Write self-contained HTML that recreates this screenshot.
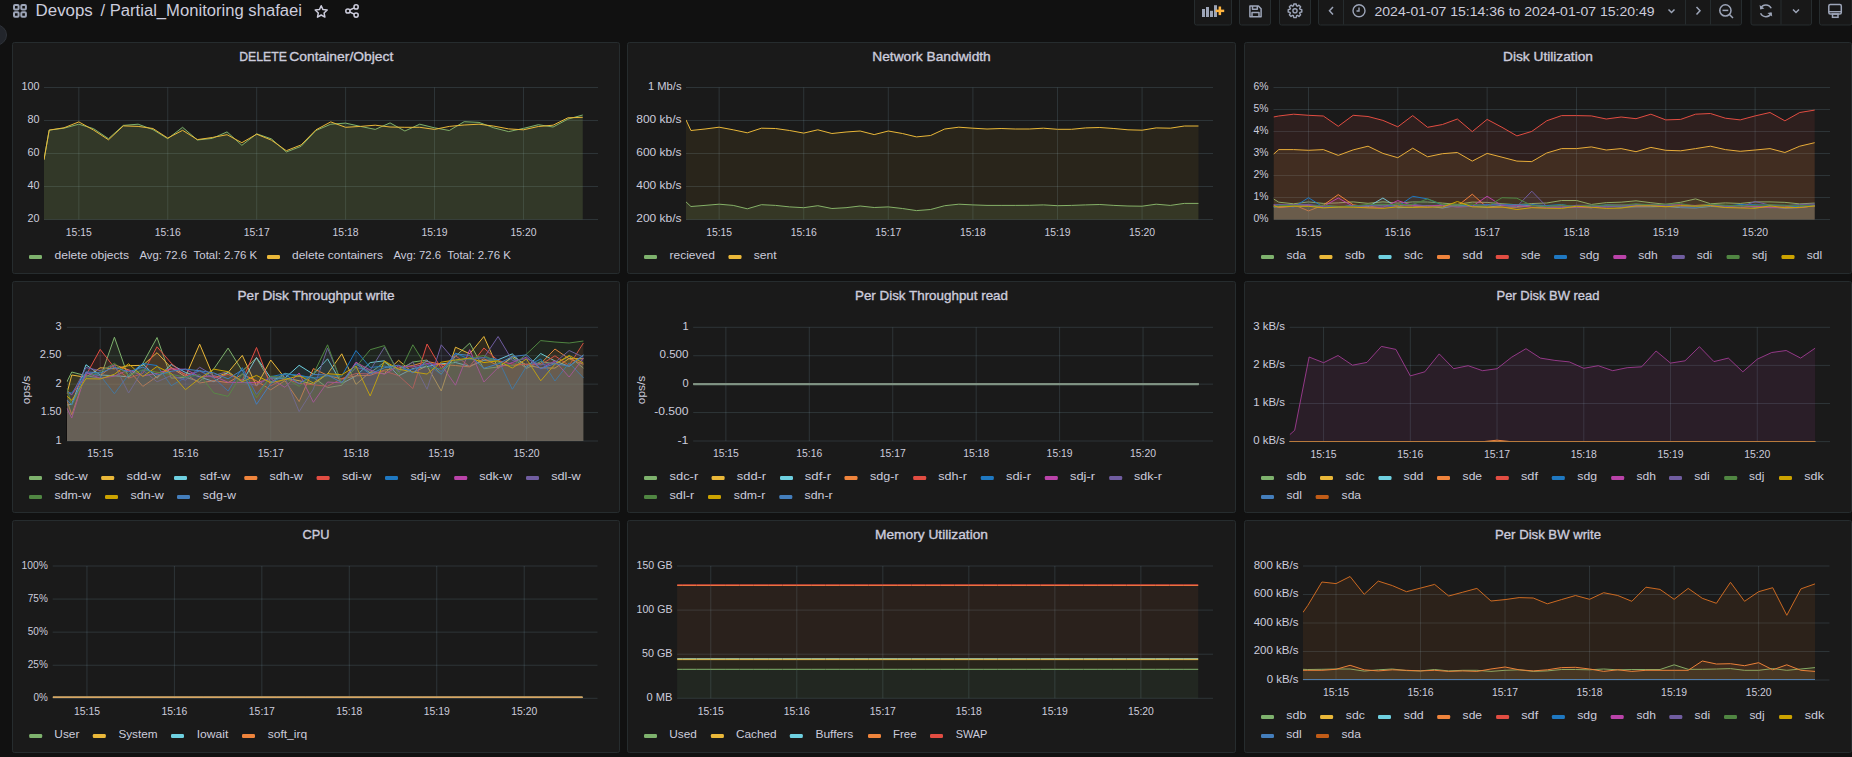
<!DOCTYPE html>
<html><head><meta charset="utf-8"><title>Devops / Partial_Monitoring shafaei</title>
<style>html,body{margin:0;padding:0;background:#111111;overflow:hidden;width:1852px;height:757px}
svg{display:block} text{font-family:"Liberation Sans",sans-serif}</style></head>
<body><svg width="1852" height="757" viewBox="0 0 1852 757" font-family='"Liberation Sans", sans-serif'><rect width="1852" height="757" fill="#111111"/><circle cx="-3.5" cy="35" r="10" fill="#22252b" stroke="#2f3339" stroke-width="1"/><rect x="14" y="5" width="4.6" height="4.6" rx="1" fill="none" stroke="#9da5b8" stroke-width="2"/><rect x="21.3" y="5" width="4.6" height="4.6" rx="1" fill="none" stroke="#9da5b8" stroke-width="2"/><rect x="14" y="12.2" width="4.6" height="4.6" rx="1" fill="none" stroke="#9da5b8" stroke-width="2"/><rect x="21.3" y="12.2" width="4.6" height="4.6" rx="1" fill="none" stroke="#9da5b8" stroke-width="2"/><text x="35.6" y="16" font-size="16" fill="#ccccdc" textLength="57.2" lengthAdjust="spacingAndGlyphs">Devops</text><text x="100.5" y="16" font-size="16" fill="#ccccdc" textLength="201.5" lengthAdjust="spacingAndGlyphs">/ Partial_Monitoring shafaei</text><polygon points="321.20,5.70 322.96,9.57 327.19,10.05 324.05,12.93 324.90,17.10 321.20,15.00 317.50,17.10 318.35,12.93 315.21,10.05 319.44,9.57" fill="none" stroke="#ccccdc" stroke-width="1.5" stroke-linejoin="round"/><g fill="none" stroke="#ccccdc" stroke-width="1.5"><circle cx="356.1" cy="6.9" r="2.1"/><circle cx="347.9" cy="11" r="2.1"/><circle cx="356.1" cy="15.1" r="2.1"/><line x1="349.8" y1="10" x2="354.2" y2="7.9"/><line x1="349.8" y1="12" x2="354.2" y2="14.1"/></g><rect x="1194.5" y="-4.5" width="37" height="29.5" rx="2" fill="#181818" stroke="#262c2e" stroke-width="1"/><rect x="1239.5" y="-4.5" width="31" height="29.5" rx="2" fill="#181818" stroke="#262c2e" stroke-width="1"/><rect x="1279.5" y="-4.5" width="31" height="29.5" rx="2" fill="#181818" stroke="#262c2e" stroke-width="1"/><rect x="1318.5" y="-4.5" width="423" height="29.5" rx="2" fill="#181818" stroke="#262c2e" stroke-width="1"/><rect x="1751.0" y="-4.5" width="60.5" height="29.5" rx="2" fill="#181818" stroke="#262c2e" stroke-width="1"/><rect x="1819.5" y="-4.5" width="32.5" height="29.5" rx="2" fill="#181818" stroke="#262c2e" stroke-width="1"/><line x1="1343.5" y1="-4" x2="1343.5" y2="24.5" stroke="#262c2e" stroke-width="1"/><line x1="1685.5" y1="-4" x2="1685.5" y2="24.5" stroke="#262c2e" stroke-width="1"/><line x1="1710.5" y1="-4" x2="1710.5" y2="24.5" stroke="#262c2e" stroke-width="1"/><line x1="1781" y1="-4" x2="1781" y2="24.5" stroke="#262c2e" stroke-width="1"/><rect x="1202" y="9" width="3" height="8" fill="#9da5b8"/><rect x="1206" y="7" width="3" height="10" fill="#9da5b8"/><rect x="1210" y="10.8" width="3" height="6.199999999999999" fill="#9da5b8"/><rect x="1214" y="5.2" width="3" height="11.8" fill="#9da5b8"/><rect x="1215.6" y="9.6" width="8.6" height="2.5" fill="#FFB43F"/><rect x="1218.6" y="6.5" width="2.5" height="8.6" fill="#FFB43F"/><g fill="none" stroke="#9da5b8" stroke-width="1.5" stroke-linejoin="round"><path d="M1249.9 6 h8.5 l2.7 2.7 v8 h-11.2 z"/><path d="M1252.5 6 v3.2 h4.8 v-3.2"/><path d="M1252 16.7 v-4.2 h7 v4.2"/></g><polygon points="1299.97,9.26 1301.80,9.63 1301.80,11.97 1299.97,12.34 1299.60,13.23 1300.63,14.78 1298.98,16.43 1297.43,15.40 1296.54,15.77 1296.17,17.60 1293.83,17.60 1293.46,15.77 1292.57,15.40 1291.02,16.43 1289.37,14.78 1290.40,13.23 1290.03,12.34 1288.20,11.97 1288.20,9.63 1290.03,9.26 1290.40,8.37 1289.37,6.82 1291.02,5.17 1292.57,6.20 1293.46,5.83 1293.83,4.00 1296.17,4.00 1296.54,5.83 1297.43,6.20 1298.98,5.17 1300.63,6.82 1299.60,8.37" fill="none" stroke="#9da5b8" stroke-width="1.4" stroke-linejoin="round"/><circle cx="1295" cy="10.8" r="2.1" fill="none" stroke="#9da5b8" stroke-width="1.4"/><path d="M1333 7 l-3.5 3.8 l3.5 3.8" fill="none" stroke="#9da5b8" stroke-width="1.5"/><path d="M1696.5 7 l3.5 3.8 l-3.5 3.8" fill="none" stroke="#9da5b8" stroke-width="1.5"/><path d="M1668.5 9.5 l3 3 l3 -3" fill="none" stroke="#9da5b8" stroke-width="1.5"/><path d="M1793 9.5 l3 3 l3 -3" fill="none" stroke="#9da5b8" stroke-width="1.5"/><circle cx="1359" cy="10.8" r="6" fill="none" stroke="#9da5b8" stroke-width="1.4"/><path d="M1359 7.5 v3.5 h-2.5" fill="none" stroke="#9da5b8" stroke-width="1.4"/><text x="1374.5" y="16" font-size="12.5" fill="#ccccdc" textLength="280" lengthAdjust="spacingAndGlyphs">2024-01-07 15:14:36 to 2024-01-07 15:20:49</text><g fill="none" stroke="#9da5b8" stroke-width="1.5"><circle cx="1725.4" cy="10.4" r="5.6"/><line x1="1729.5" y1="14.5" x2="1733" y2="18"/><line x1="1722.5" y1="10.4" x2="1728.3" y2="10.4"/></g><g fill="none" stroke="#9da5b8" stroke-width="1.5"><path d="M1771.2 8.3 A5.8 5.8 0 0 0 1760.6 8.5"/><path d="M1760.6 13.3 A5.8 5.8 0 0 0 1771.2 13.1"/></g><path d="M1759.6 5 l0.6 4.4 l4.2 -0.9 z" fill="#9da5b8"/><path d="M1772.2 16.6 l-0.6 -4.4 l-4.2 0.9 z" fill="#9da5b8"/><g fill="none" stroke="#9da5b8" stroke-width="1.5"><rect x="1828.8" y="4.5" width="12.5" height="9.5" rx="1.5"/><rect x="1832.5" y="14" width="5.5" height="3.3"/></g><line x1="1829" y1="11.7" x2="1841" y2="11.7" stroke="#9da5b8" stroke-width="1.4"/><rect x="12.5" y="42.5" width="607" height="231" rx="2" ry="2" fill="#1a1a1a" stroke="#262c2e" stroke-width="1"/><text x="239.30" y="61.00" font-size="13" textLength="47.5" lengthAdjust="spacingAndGlyphs" fill="#ccccdc" stroke="#ccccdc" stroke-width="0.35">DELETE</text><text x="289.30" y="61.00" font-size="13" textLength="104" lengthAdjust="spacingAndGlyphs" fill="#ccccdc" stroke="#ccccdc" stroke-width="0.35">Container/Object</text><path d="M44 87.50H598M44 120.50H598M44 153.50H598M44 186.50H598M44 219.50H598M78.83 87.5V219.5M167.75 87.5V219.5M256.68 87.5V219.5M345.60 87.5V219.5M434.53 87.5V219.5M523.45 87.5V219.5" stroke="#9cc8d8" stroke-opacity="0.155" stroke-width="1" fill="none"/><clipPath id="clip1"><rect x="44" y="85.5" width="554" height="134.5"/></clipPath><g clip-path="url(#clip1)"><path d="M44.00 159.70 L49.19 130.10 L64.01 128.20 L78.83 124.20 L93.65 128.70 L108.47 138.70 L123.29 125.40 L138.11 124.20 L152.93 129.60 L167.75 138.70 L182.57 127.30 L197.39 140.00 L212.22 138.40 L227.04 131.90 L241.86 145.30 L256.68 133.80 L271.50 138.90 L286.32 152.00 L301.14 146.30 L315.96 130.50 L330.78 124.20 L345.60 123.10 L360.42 126.40 L375.24 129.40 L390.06 122.90 L404.89 131.00 L419.71 124.20 L434.53 127.80 L449.35 130.50 L464.17 121.70 L478.99 122.40 L493.81 127.80 L508.63 131.60 L523.45 128.40 L538.27 124.70 L553.09 127.00 L567.91 119.10 L582.73 115.00 L582.73 219.50 L44.00 219.50 Z" fill="#7EB26D" fill-opacity="0.16" stroke="none"/><path d="M44.00 159.70 L49.19 130.10 L64.01 128.20 L78.83 124.20 L93.65 128.70 L108.47 138.70 L123.29 125.40 L138.11 124.20 L152.93 129.60 L167.75 138.70 L182.57 127.30 L197.39 140.00 L212.22 138.40 L227.04 131.90 L241.86 145.30 L256.68 133.80 L271.50 138.90 L286.32 152.00 L301.14 146.30 L315.96 130.50 L330.78 124.20 L345.60 123.10 L360.42 126.40 L375.24 129.40 L390.06 122.90 L404.89 131.00 L419.71 124.20 L434.53 127.80 L449.35 130.50 L464.17 121.70 L478.99 122.40 L493.81 127.80 L508.63 131.60 L523.45 128.40 L538.27 124.70 L553.09 127.00 L567.91 119.10 L582.73 115.00" fill="none" stroke="#7EB26D" stroke-width="1.0" stroke-linejoin="round"/><path d="M44.00 159.70 L49.19 130.10 L64.01 127.80 L78.83 121.90 L93.65 130.10 L108.47 139.80 L123.29 125.90 L138.11 126.40 L152.93 128.50 L167.75 138.10 L182.57 130.30 L197.39 139.60 L212.22 137.50 L227.04 134.70 L241.86 142.70 L256.68 134.20 L271.50 140.20 L286.32 150.70 L301.14 144.90 L315.96 129.80 L330.78 121.90 L345.60 127.30 L360.42 126.40 L375.24 125.20 L390.06 127.00 L404.89 127.30 L419.71 127.30 L434.53 129.40 L449.35 126.40 L464.17 125.00 L478.99 124.20 L493.81 126.10 L508.63 128.90 L523.45 129.80 L538.27 126.50 L553.09 125.20 L567.91 117.80 L582.73 117.30 L582.73 219.50 L44.00 219.50 Z" fill="#EAB839" fill-opacity="0.05" stroke="none"/><path d="M44.00 159.70 L49.19 130.10 L64.01 127.80 L78.83 121.90 L93.65 130.10 L108.47 139.80 L123.29 125.90 L138.11 126.40 L152.93 128.50 L167.75 138.10 L182.57 130.30 L197.39 139.60 L212.22 137.50 L227.04 134.70 L241.86 142.70 L256.68 134.20 L271.50 140.20 L286.32 150.70 L301.14 144.90 L315.96 129.80 L330.78 121.90 L345.60 127.30 L360.42 126.40 L375.24 125.20 L390.06 127.00 L404.89 127.30 L419.71 127.30 L434.53 129.40 L449.35 126.40 L464.17 125.00 L478.99 124.20 L493.81 126.10 L508.63 128.90 L523.45 129.80 L538.27 126.50 L553.09 125.20 L567.91 117.80 L582.73 117.30" fill="none" stroke="#EAB839" stroke-width="1.0" stroke-linejoin="round"/></g><text x="39.50" y="90.10" font-size="11" text-anchor="end" textLength="18" lengthAdjust="spacingAndGlyphs" fill="#ccccdc">100</text><text x="39.50" y="123.10" font-size="11" text-anchor="end" textLength="12" lengthAdjust="spacingAndGlyphs" fill="#ccccdc">80</text><text x="39.50" y="156.10" font-size="11" text-anchor="end" textLength="12" lengthAdjust="spacingAndGlyphs" fill="#ccccdc">60</text><text x="39.50" y="189.10" font-size="11" text-anchor="end" textLength="12" lengthAdjust="spacingAndGlyphs" fill="#ccccdc">40</text><text x="39.50" y="222.10" font-size="11" text-anchor="end" textLength="12" lengthAdjust="spacingAndGlyphs" fill="#ccccdc">20</text><text x="78.83" y="235.70" font-size="11" text-anchor="middle" textLength="26" lengthAdjust="spacingAndGlyphs" fill="#ccccdc">15:15</text><text x="167.75" y="235.70" font-size="11" text-anchor="middle" textLength="26" lengthAdjust="spacingAndGlyphs" fill="#ccccdc">15:16</text><text x="256.68" y="235.70" font-size="11" text-anchor="middle" textLength="26" lengthAdjust="spacingAndGlyphs" fill="#ccccdc">15:17</text><text x="345.60" y="235.70" font-size="11" text-anchor="middle" textLength="26" lengthAdjust="spacingAndGlyphs" fill="#ccccdc">15:18</text><text x="434.53" y="235.70" font-size="11" text-anchor="middle" textLength="26" lengthAdjust="spacingAndGlyphs" fill="#ccccdc">15:19</text><text x="523.45" y="235.70" font-size="11" text-anchor="middle" textLength="26" lengthAdjust="spacingAndGlyphs" fill="#ccccdc">15:20</text><rect x="29" y="255" width="13" height="4" rx="1.2" fill="#7EB26D"/><text x="54.50" y="259.00" font-size="11" textLength="74.5" lengthAdjust="spacingAndGlyphs" fill="#ccccdc">delete objects</text><rect x="267" y="255" width="13" height="4" rx="1.2" fill="#EAB839"/><text x="292.00" y="259.00" font-size="11" textLength="91" lengthAdjust="spacingAndGlyphs" fill="#ccccdc">delete containers</text><text x="139.50" y="259.00" font-size="11" textLength="47.6" lengthAdjust="spacingAndGlyphs" fill="#ccccdc">Avg: 72.6</text><text x="193.60" y="259.00" font-size="11" textLength="63.6" lengthAdjust="spacingAndGlyphs" fill="#ccccdc">Total: 2.76 K</text><text x="393.50" y="259.00" font-size="11" textLength="47.6" lengthAdjust="spacingAndGlyphs" fill="#ccccdc">Avg: 72.6</text><text x="447.30" y="259.00" font-size="11" textLength="63.6" lengthAdjust="spacingAndGlyphs" fill="#ccccdc">Total: 2.76 K</text><rect x="627.5" y="42.5" width="608" height="231" rx="2" ry="2" fill="#1a1a1a" stroke="#262c2e" stroke-width="1"/><text x="931.50" y="61.00" font-size="13" text-anchor="middle" font-weight="500" textLength="118.5" lengthAdjust="spacingAndGlyphs" fill="#ccccdc" stroke="#ccccdc" stroke-width="0.35">Network Bandwidth</text><path d="M686 87.50H1213M686 120.50H1213M686 153.50H1213M686 186.50H1213M686 219.50H1213M719.13 87.5V219.5M803.72 87.5V219.5M888.31 87.5V219.5M972.90 87.5V219.5M1057.49 87.5V219.5M1142.08 87.5V219.5" stroke="#9cc8d8" stroke-opacity="0.155" stroke-width="1" fill="none"/><clipPath id="clip2"><rect x="686" y="85.5" width="527" height="134.5"/></clipPath><g clip-path="url(#clip2)"><path d="M686.00 201.90 L690.93 206.50 L705.03 205.40 L719.13 204.20 L733.23 205.40 L747.33 208.80 L761.43 204.70 L775.53 205.40 L789.62 206.90 L803.72 207.70 L817.82 205.70 L831.92 208.50 L846.02 207.70 L860.12 206.00 L874.21 207.50 L888.31 206.90 L902.41 208.50 L916.51 210.60 L930.61 209.50 L944.71 205.70 L958.80 204.20 L972.90 204.90 L987.00 205.40 L1001.10 205.40 L1015.20 205.40 L1029.30 205.30 L1043.40 204.90 L1057.49 205.70 L1071.59 205.40 L1085.69 204.90 L1099.79 204.50 L1113.89 205.40 L1127.99 206.00 L1142.08 206.20 L1156.18 204.20 L1170.28 205.40 L1184.38 203.40 L1198.48 203.40 L1198.48 219.50 L686.00 219.50 Z" fill="#7EB26D" fill-opacity="0.13" stroke="none"/><path d="M686.00 201.90 L690.93 206.50 L705.03 205.40 L719.13 204.20 L733.23 205.40 L747.33 208.80 L761.43 204.70 L775.53 205.40 L789.62 206.90 L803.72 207.70 L817.82 205.70 L831.92 208.50 L846.02 207.70 L860.12 206.00 L874.21 207.50 L888.31 206.90 L902.41 208.50 L916.51 210.60 L930.61 209.50 L944.71 205.70 L958.80 204.20 L972.90 204.90 L987.00 205.40 L1001.10 205.40 L1015.20 205.40 L1029.30 205.30 L1043.40 204.90 L1057.49 205.70 L1071.59 205.40 L1085.69 204.90 L1099.79 204.50 L1113.89 205.40 L1127.99 206.00 L1142.08 206.20 L1156.18 204.20 L1170.28 205.40 L1184.38 203.40 L1198.48 203.40" fill="none" stroke="#7EB26D" stroke-width="1.0" stroke-linejoin="round"/><path d="M686.00 119.90 L690.93 130.50 L705.03 129.00 L719.13 127.20 L733.23 129.80 L747.33 132.80 L761.43 128.20 L775.53 128.50 L789.62 130.50 L803.72 133.10 L817.82 129.80 L831.92 133.50 L846.02 132.00 L860.12 131.00 L874.21 134.60 L888.31 131.00 L902.41 133.50 L916.51 136.90 L930.61 135.50 L944.71 129.00 L958.80 127.20 L972.90 128.20 L987.00 129.00 L1001.10 128.50 L1015.20 129.00 L1029.30 129.00 L1043.40 128.20 L1057.49 129.30 L1071.59 129.30 L1085.69 127.90 L1099.79 127.50 L1113.89 128.50 L1127.99 129.80 L1142.08 130.20 L1156.18 127.90 L1170.28 128.20 L1184.38 126.00 L1198.48 126.00 L1198.48 219.50 L686.00 219.50 Z" fill="#EAB839" fill-opacity="0.08" stroke="none"/><path d="M686.00 119.90 L690.93 130.50 L705.03 129.00 L719.13 127.20 L733.23 129.80 L747.33 132.80 L761.43 128.20 L775.53 128.50 L789.62 130.50 L803.72 133.10 L817.82 129.80 L831.92 133.50 L846.02 132.00 L860.12 131.00 L874.21 134.60 L888.31 131.00 L902.41 133.50 L916.51 136.90 L930.61 135.50 L944.71 129.00 L958.80 127.20 L972.90 128.20 L987.00 129.00 L1001.10 128.50 L1015.20 129.00 L1029.30 129.00 L1043.40 128.20 L1057.49 129.30 L1071.59 129.30 L1085.69 127.90 L1099.79 127.50 L1113.89 128.50 L1127.99 129.80 L1142.08 130.20 L1156.18 127.90 L1170.28 128.20 L1184.38 126.00 L1198.48 126.00" fill="none" stroke="#EAB839" stroke-width="1.0" stroke-linejoin="round"/></g><text x="681.50" y="90.10" font-size="11" text-anchor="end" textLength="33.6" lengthAdjust="spacingAndGlyphs" fill="#ccccdc">1 Mb/s</text><text x="681.50" y="123.10" font-size="11" text-anchor="end" textLength="45.2" lengthAdjust="spacingAndGlyphs" fill="#ccccdc">800 kb/s</text><text x="681.50" y="156.10" font-size="11" text-anchor="end" textLength="45.2" lengthAdjust="spacingAndGlyphs" fill="#ccccdc">600 kb/s</text><text x="681.50" y="189.10" font-size="11" text-anchor="end" textLength="45.2" lengthAdjust="spacingAndGlyphs" fill="#ccccdc">400 kb/s</text><text x="681.50" y="222.10" font-size="11" text-anchor="end" textLength="45.2" lengthAdjust="spacingAndGlyphs" fill="#ccccdc">200 kb/s</text><text x="719.13" y="235.70" font-size="11" text-anchor="middle" textLength="26" lengthAdjust="spacingAndGlyphs" fill="#ccccdc">15:15</text><text x="803.72" y="235.70" font-size="11" text-anchor="middle" textLength="26" lengthAdjust="spacingAndGlyphs" fill="#ccccdc">15:16</text><text x="888.31" y="235.70" font-size="11" text-anchor="middle" textLength="26" lengthAdjust="spacingAndGlyphs" fill="#ccccdc">15:17</text><text x="972.90" y="235.70" font-size="11" text-anchor="middle" textLength="26" lengthAdjust="spacingAndGlyphs" fill="#ccccdc">15:18</text><text x="1057.49" y="235.70" font-size="11" text-anchor="middle" textLength="26" lengthAdjust="spacingAndGlyphs" fill="#ccccdc">15:19</text><text x="1142.08" y="235.70" font-size="11" text-anchor="middle" textLength="26" lengthAdjust="spacingAndGlyphs" fill="#ccccdc">15:20</text><rect x="644" y="255" width="13" height="4" rx="1.2" fill="#7EB26D"/><text x="669.50" y="259.00" font-size="11" textLength="45.3" lengthAdjust="spacingAndGlyphs" fill="#ccccdc">recieved</text><rect x="728.5" y="255" width="13" height="4" rx="1.2" fill="#EAB839"/><text x="753.80" y="259.00" font-size="11" textLength="22.8" lengthAdjust="spacingAndGlyphs" fill="#ccccdc">sent</text><rect x="1244.5" y="42.5" width="607" height="231" rx="2" ry="2" fill="#1a1a1a" stroke="#262c2e" stroke-width="1"/><text x="1548.00" y="61.00" font-size="13" text-anchor="middle" font-weight="500" textLength="90" lengthAdjust="spacingAndGlyphs" fill="#ccccdc" stroke="#ccccdc" stroke-width="0.35">Disk Utilization</text><path d="M1273.5 87.50H1830M1273.5 109.50H1830M1273.5 131.50H1830M1273.5 153.50H1830M1273.5 175.50H1830M1273.5 197.50H1830M1273.5 219.50H1830M1308.49 87.5V219.5M1397.81 87.5V219.5M1487.14 87.5V219.5M1576.46 87.5V219.5M1665.79 87.5V219.5M1755.12 87.5V219.5" stroke="#9cc8d8" stroke-opacity="0.155" stroke-width="1" fill="none"/><clipPath id="clip3"><rect x="1273.5" y="85.5" width="556.5" height="134.5"/></clipPath><g clip-path="url(#clip3)"><path d="M1273.50 198.90 L1278.71 202.18 L1293.60 203.78 L1308.49 201.93 L1323.37 203.41 L1338.26 202.87 L1353.15 201.89 L1368.04 203.32 L1382.92 201.82 L1397.81 203.09 L1412.70 201.92 L1427.59 201.99 L1442.47 203.06 L1457.36 204.35 L1472.25 202.10 L1487.14 202.41 L1502.03 203.71 L1516.91 204.73 L1531.80 203.55 L1546.69 202.97 L1561.58 200.50 L1576.46 200.50 L1591.35 204.45 L1606.24 202.63 L1621.13 202.16 L1636.01 200.80 L1650.90 202.69 L1665.79 204.31 L1680.68 202.28 L1695.56 198.90 L1710.45 203.74 L1725.34 202.89 L1740.23 203.45 L1755.12 201.90 L1770.00 201.89 L1784.89 202.36 L1799.78 203.88 L1814.67 203.07 L1814.67 219.50 L1273.50 219.50 Z" fill="#7EB26D" fill-opacity="0.1" stroke="none"/><path d="M1273.50 198.90 L1278.71 202.18 L1293.60 203.78 L1308.49 201.93 L1323.37 203.41 L1338.26 202.87 L1353.15 201.89 L1368.04 203.32 L1382.92 201.82 L1397.81 203.09 L1412.70 201.92 L1427.59 201.99 L1442.47 203.06 L1457.36 204.35 L1472.25 202.10 L1487.14 202.41 L1502.03 203.71 L1516.91 204.73 L1531.80 203.55 L1546.69 202.97 L1561.58 200.50 L1576.46 200.50 L1591.35 204.45 L1606.24 202.63 L1621.13 202.16 L1636.01 200.80 L1650.90 202.69 L1665.79 204.31 L1680.68 202.28 L1695.56 198.90 L1710.45 203.74 L1725.34 202.89 L1740.23 203.45 L1755.12 201.90 L1770.00 201.89 L1784.89 202.36 L1799.78 203.88 L1814.67 203.07" fill="none" stroke="#7EB26D" stroke-width="1.0" stroke-linejoin="round"/><path d="M1273.50 154.20 L1278.71 149.60 L1293.60 149.60 L1308.49 150.30 L1323.37 149.60 L1338.26 155.40 L1353.15 149.90 L1368.04 146.20 L1382.92 153.40 L1397.81 157.70 L1412.70 148.20 L1427.59 156.80 L1442.47 153.70 L1457.36 152.50 L1472.25 161.10 L1487.14 153.40 L1502.03 157.20 L1516.91 161.10 L1531.80 161.60 L1546.69 153.00 L1561.58 148.60 L1576.46 148.60 L1591.35 146.90 L1606.24 150.00 L1621.13 148.60 L1636.01 151.70 L1650.90 147.40 L1665.79 150.30 L1680.68 150.80 L1695.56 148.60 L1710.45 146.20 L1725.34 149.60 L1740.23 151.30 L1755.12 150.00 L1770.00 148.60 L1784.89 152.50 L1799.78 146.20 L1814.67 142.70 L1814.67 219.50 L1273.50 219.50 Z" fill="#EAB839" fill-opacity="0.1" stroke="none"/><path d="M1273.50 154.20 L1278.71 149.60 L1293.60 149.60 L1308.49 150.30 L1323.37 149.60 L1338.26 155.40 L1353.15 149.90 L1368.04 146.20 L1382.92 153.40 L1397.81 157.70 L1412.70 148.20 L1427.59 156.80 L1442.47 153.70 L1457.36 152.50 L1472.25 161.10 L1487.14 153.40 L1502.03 157.20 L1516.91 161.10 L1531.80 161.60 L1546.69 153.00 L1561.58 148.60 L1576.46 148.60 L1591.35 146.90 L1606.24 150.00 L1621.13 148.60 L1636.01 151.70 L1650.90 147.40 L1665.79 150.30 L1680.68 150.80 L1695.56 148.60 L1710.45 146.20 L1725.34 149.60 L1740.23 151.30 L1755.12 150.00 L1770.00 148.60 L1784.89 152.50 L1799.78 146.20 L1814.67 142.70" fill="none" stroke="#EAB839" stroke-width="1.0" stroke-linejoin="round"/><path d="M1273.50 207.00 L1278.71 206.77 L1293.60 206.35 L1308.49 205.86 L1323.37 207.44 L1338.26 207.14 L1353.15 205.68 L1368.04 206.74 L1382.92 198.00 L1397.81 207.70 L1412.70 207.23 L1427.59 205.82 L1442.47 208.04 L1457.36 205.28 L1472.25 206.24 L1487.14 207.32 L1502.03 205.39 L1516.91 206.46 L1531.80 205.03 L1546.69 207.04 L1561.58 207.35 L1576.46 206.73 L1591.35 207.70 L1606.24 205.90 L1621.13 207.12 L1636.01 206.80 L1650.90 206.76 L1665.79 206.36 L1680.68 207.59 L1695.56 207.92 L1710.45 206.42 L1725.34 207.03 L1740.23 205.09 L1755.12 207.14 L1770.00 206.97 L1784.89 208.08 L1799.78 207.53 L1814.67 205.81 L1814.67 219.50 L1273.50 219.50 Z" fill="#6ED0E0" fill-opacity="0.1" stroke="none"/><path d="M1273.50 207.00 L1278.71 206.77 L1293.60 206.35 L1308.49 205.86 L1323.37 207.44 L1338.26 207.14 L1353.15 205.68 L1368.04 206.74 L1382.92 198.00 L1397.81 207.70 L1412.70 207.23 L1427.59 205.82 L1442.47 208.04 L1457.36 205.28 L1472.25 206.24 L1487.14 207.32 L1502.03 205.39 L1516.91 206.46 L1531.80 205.03 L1546.69 207.04 L1561.58 207.35 L1576.46 206.73 L1591.35 207.70 L1606.24 205.90 L1621.13 207.12 L1636.01 206.80 L1650.90 206.76 L1665.79 206.36 L1680.68 207.59 L1695.56 207.92 L1710.45 206.42 L1725.34 207.03 L1740.23 205.09 L1755.12 207.14 L1770.00 206.97 L1784.89 208.08 L1799.78 207.53 L1814.67 205.81" fill="none" stroke="#6ED0E0" stroke-width="1.0" stroke-linejoin="round"/><path d="M1273.50 205.83 L1278.71 206.74 L1293.60 204.67 L1308.49 210.90 L1323.37 205.14 L1338.26 194.60 L1353.15 204.79 L1368.04 207.06 L1382.92 205.01 L1397.81 205.39 L1412.70 205.85 L1427.59 207.39 L1442.47 204.86 L1457.36 206.04 L1472.25 194.20 L1487.14 207.43 L1502.03 207.22 L1516.91 207.36 L1531.80 205.49 L1546.69 205.93 L1561.58 205.75 L1576.46 207.43 L1591.35 207.66 L1606.24 205.08 L1621.13 205.16 L1636.01 205.34 L1650.90 205.35 L1665.79 206.15 L1680.68 206.49 L1695.56 205.44 L1710.45 204.61 L1725.34 205.94 L1740.23 205.78 L1755.12 206.41 L1770.00 207.65 L1784.89 206.81 L1799.78 206.25 L1814.67 206.58 L1814.67 219.50 L1273.50 219.50 Z" fill="#EF843C" fill-opacity="0.1" stroke="none"/><path d="M1273.50 205.83 L1278.71 206.74 L1293.60 204.67 L1308.49 210.90 L1323.37 205.14 L1338.26 194.60 L1353.15 204.79 L1368.04 207.06 L1382.92 205.01 L1397.81 205.39 L1412.70 205.85 L1427.59 207.39 L1442.47 204.86 L1457.36 206.04 L1472.25 194.20 L1487.14 207.43 L1502.03 207.22 L1516.91 207.36 L1531.80 205.49 L1546.69 205.93 L1561.58 205.75 L1576.46 207.43 L1591.35 207.66 L1606.24 205.08 L1621.13 205.16 L1636.01 205.34 L1650.90 205.35 L1665.79 206.15 L1680.68 206.49 L1695.56 205.44 L1710.45 204.61 L1725.34 205.94 L1740.23 205.78 L1755.12 206.41 L1770.00 207.65 L1784.89 206.81 L1799.78 206.25 L1814.67 206.58" fill="none" stroke="#EF843C" stroke-width="1.0" stroke-linejoin="round"/><path d="M1273.50 117.00 L1278.71 116.00 L1293.60 114.20 L1308.49 115.30 L1323.37 116.00 L1338.26 126.30 L1353.15 115.30 L1368.04 116.50 L1382.92 120.40 L1397.81 126.80 L1412.70 115.60 L1427.59 127.30 L1442.47 124.50 L1457.36 119.00 L1472.25 131.60 L1487.14 119.40 L1502.03 127.30 L1516.91 135.90 L1531.80 131.40 L1546.69 120.80 L1561.58 115.60 L1576.46 115.60 L1591.35 115.90 L1606.24 119.00 L1621.13 117.00 L1636.01 118.70 L1650.90 114.20 L1665.79 119.90 L1680.68 119.40 L1695.56 114.20 L1710.45 113.50 L1725.34 118.20 L1740.23 119.90 L1755.12 115.90 L1770.00 112.50 L1784.89 120.80 L1799.78 112.50 L1814.67 110.10 L1814.67 219.50 L1273.50 219.50 Z" fill="#E24D42" fill-opacity="0.1" stroke="none"/><path d="M1273.50 117.00 L1278.71 116.00 L1293.60 114.20 L1308.49 115.30 L1323.37 116.00 L1338.26 126.30 L1353.15 115.30 L1368.04 116.50 L1382.92 120.40 L1397.81 126.80 L1412.70 115.60 L1427.59 127.30 L1442.47 124.50 L1457.36 119.00 L1472.25 131.60 L1487.14 119.40 L1502.03 127.30 L1516.91 135.90 L1531.80 131.40 L1546.69 120.80 L1561.58 115.60 L1576.46 115.60 L1591.35 115.90 L1606.24 119.00 L1621.13 117.00 L1636.01 118.70 L1650.90 114.20 L1665.79 119.90 L1680.68 119.40 L1695.56 114.20 L1710.45 113.50 L1725.34 118.20 L1740.23 119.90 L1755.12 115.90 L1770.00 112.50 L1784.89 120.80 L1799.78 112.50 L1814.67 110.10" fill="none" stroke="#E24D42" stroke-width="1.0" stroke-linejoin="round"/><path d="M1273.50 206.56 L1278.71 204.57 L1293.60 207.28 L1308.49 197.70 L1323.37 207.20 L1338.26 206.95 L1353.15 205.66 L1368.04 205.68 L1382.92 204.73 L1397.81 206.43 L1412.70 196.30 L1427.59 198.90 L1442.47 205.07 L1457.36 204.92 L1472.25 205.49 L1487.14 204.57 L1502.03 204.40 L1516.91 204.88 L1531.80 204.72 L1546.69 205.56 L1561.58 204.48 L1576.46 207.20 L1591.35 206.37 L1606.24 204.88 L1621.13 205.21 L1636.01 205.51 L1650.90 205.57 L1665.79 204.79 L1680.68 207.12 L1695.56 207.58 L1710.45 205.89 L1725.34 205.95 L1740.23 204.67 L1755.12 204.73 L1770.00 205.50 L1784.89 205.25 L1799.78 207.05 L1814.67 204.92 L1814.67 219.50 L1273.50 219.50 Z" fill="#1F78C1" fill-opacity="0.1" stroke="none"/><path d="M1273.50 206.56 L1278.71 204.57 L1293.60 207.28 L1308.49 197.70 L1323.37 207.20 L1338.26 206.95 L1353.15 205.66 L1368.04 205.68 L1382.92 204.73 L1397.81 206.43 L1412.70 196.30 L1427.59 198.90 L1442.47 205.07 L1457.36 204.92 L1472.25 205.49 L1487.14 204.57 L1502.03 204.40 L1516.91 204.88 L1531.80 204.72 L1546.69 205.56 L1561.58 204.48 L1576.46 207.20 L1591.35 206.37 L1606.24 204.88 L1621.13 205.21 L1636.01 205.51 L1650.90 205.57 L1665.79 204.79 L1680.68 207.12 L1695.56 207.58 L1710.45 205.89 L1725.34 205.95 L1740.23 204.67 L1755.12 204.73 L1770.00 205.50 L1784.89 205.25 L1799.78 207.05 L1814.67 204.92" fill="none" stroke="#1F78C1" stroke-width="1.0" stroke-linejoin="round"/><path d="M1273.50 204.67 L1278.71 207.64 L1293.60 206.29 L1308.49 205.07 L1323.37 206.34 L1338.26 198.00 L1353.15 206.29 L1368.04 207.73 L1382.92 207.36 L1397.81 200.60 L1412.70 205.44 L1427.59 205.77 L1442.47 205.13 L1457.36 207.07 L1472.25 206.30 L1487.14 196.30 L1502.03 205.65 L1516.91 205.31 L1531.80 207.20 L1546.69 207.75 L1561.58 207.33 L1576.46 207.18 L1591.35 207.22 L1606.24 206.97 L1621.13 205.33 L1636.01 206.26 L1650.90 205.74 L1665.79 204.69 L1680.68 204.69 L1695.56 205.49 L1710.45 205.43 L1725.34 206.82 L1740.23 207.66 L1755.12 206.03 L1770.00 207.60 L1784.89 207.76 L1799.78 207.66 L1814.67 205.77 L1814.67 219.50 L1273.50 219.50 Z" fill="#BA43A9" fill-opacity="0.1" stroke="none"/><path d="M1273.50 204.67 L1278.71 207.64 L1293.60 206.29 L1308.49 205.07 L1323.37 206.34 L1338.26 198.00 L1353.15 206.29 L1368.04 207.73 L1382.92 207.36 L1397.81 200.60 L1412.70 205.44 L1427.59 205.77 L1442.47 205.13 L1457.36 207.07 L1472.25 206.30 L1487.14 196.30 L1502.03 205.65 L1516.91 205.31 L1531.80 207.20 L1546.69 207.75 L1561.58 207.33 L1576.46 207.18 L1591.35 207.22 L1606.24 206.97 L1621.13 205.33 L1636.01 206.26 L1650.90 205.74 L1665.79 204.69 L1680.68 204.69 L1695.56 205.49 L1710.45 205.43 L1725.34 206.82 L1740.23 207.66 L1755.12 206.03 L1770.00 207.60 L1784.89 207.76 L1799.78 207.66 L1814.67 205.77" fill="none" stroke="#BA43A9" stroke-width="1.0" stroke-linejoin="round"/><path d="M1273.50 204.71 L1278.71 204.73 L1293.60 204.63 L1308.49 204.65 L1323.37 206.00 L1338.26 206.88 L1353.15 206.69 L1368.04 205.53 L1382.92 206.09 L1397.81 206.56 L1412.70 204.27 L1427.59 206.11 L1442.47 206.91 L1457.36 206.50 L1472.25 206.40 L1487.14 205.53 L1502.03 204.57 L1516.91 206.53 L1531.80 191.20 L1546.69 206.56 L1561.58 207.11 L1576.46 205.27 L1591.35 205.28 L1606.24 207.03 L1621.13 206.32 L1636.01 204.54 L1650.90 204.41 L1665.79 204.48 L1680.68 206.90 L1695.56 206.58 L1710.45 204.47 L1725.34 206.64 L1740.23 207.14 L1755.12 201.50 L1770.00 205.12 L1784.89 205.76 L1799.78 204.42 L1814.67 204.05 L1814.67 219.50 L1273.50 219.50 Z" fill="#705DA0" fill-opacity="0.1" stroke="none"/><path d="M1273.50 204.71 L1278.71 204.73 L1293.60 204.63 L1308.49 204.65 L1323.37 206.00 L1338.26 206.88 L1353.15 206.69 L1368.04 205.53 L1382.92 206.09 L1397.81 206.56 L1412.70 204.27 L1427.59 206.11 L1442.47 206.91 L1457.36 206.50 L1472.25 206.40 L1487.14 205.53 L1502.03 204.57 L1516.91 206.53 L1531.80 191.20 L1546.69 206.56 L1561.58 207.11 L1576.46 205.27 L1591.35 205.28 L1606.24 207.03 L1621.13 206.32 L1636.01 204.54 L1650.90 204.41 L1665.79 204.48 L1680.68 206.90 L1695.56 206.58 L1710.45 204.47 L1725.34 206.64 L1740.23 207.14 L1755.12 201.50 L1770.00 205.12 L1784.89 205.76 L1799.78 204.42 L1814.67 204.05" fill="none" stroke="#705DA0" stroke-width="1.0" stroke-linejoin="round"/><path d="M1273.50 206.71 L1278.71 205.68 L1293.60 205.29 L1308.49 206.59 L1323.37 204.99 L1338.26 206.39 L1353.15 206.24 L1368.04 204.28 L1382.92 204.41 L1397.81 204.54 L1412.70 204.37 L1427.59 198.90 L1442.47 204.43 L1457.36 204.94 L1472.25 204.02 L1487.14 206.51 L1502.03 197.70 L1516.91 198.20 L1531.80 205.47 L1546.69 206.49 L1561.58 204.95 L1576.46 206.54 L1591.35 205.21 L1606.24 205.30 L1621.13 205.28 L1636.01 203.66 L1650.90 205.01 L1665.79 204.19 L1680.68 203.61 L1695.56 206.16 L1710.45 204.15 L1725.34 205.12 L1740.23 205.92 L1755.12 205.38 L1770.00 204.64 L1784.89 205.26 L1799.78 205.38 L1814.67 206.11 L1814.67 219.50 L1273.50 219.50 Z" fill="#508642" fill-opacity="0.1" stroke="none"/><path d="M1273.50 206.71 L1278.71 205.68 L1293.60 205.29 L1308.49 206.59 L1323.37 204.99 L1338.26 206.39 L1353.15 206.24 L1368.04 204.28 L1382.92 204.41 L1397.81 204.54 L1412.70 204.37 L1427.59 198.90 L1442.47 204.43 L1457.36 204.94 L1472.25 204.02 L1487.14 206.51 L1502.03 197.70 L1516.91 198.20 L1531.80 205.47 L1546.69 206.49 L1561.58 204.95 L1576.46 206.54 L1591.35 205.21 L1606.24 205.30 L1621.13 205.28 L1636.01 203.66 L1650.90 205.01 L1665.79 204.19 L1680.68 203.61 L1695.56 206.16 L1710.45 204.15 L1725.34 205.12 L1740.23 205.92 L1755.12 205.38 L1770.00 204.64 L1784.89 205.26 L1799.78 205.38 L1814.67 206.11" fill="none" stroke="#508642" stroke-width="1.0" stroke-linejoin="round"/><path d="M1273.50 205.74 L1278.71 207.19 L1293.60 206.20 L1308.49 206.29 L1323.37 207.87 L1338.26 207.02 L1353.15 207.20 L1368.04 207.83 L1382.92 208.32 L1397.81 206.82 L1412.70 207.36 L1427.59 207.02 L1442.47 207.04 L1457.36 201.50 L1472.25 206.85 L1487.14 207.11 L1502.03 206.93 L1516.91 209.50 L1531.80 207.64 L1546.69 208.20 L1561.58 208.41 L1576.46 206.23 L1591.35 207.19 L1606.24 208.42 L1621.13 208.09 L1636.01 205.84 L1650.90 205.79 L1665.79 206.81 L1680.68 205.63 L1695.56 206.17 L1710.45 205.63 L1725.34 207.54 L1740.23 207.91 L1755.12 208.27 L1770.00 205.89 L1784.89 207.69 L1799.78 207.51 L1814.67 205.86 L1814.67 219.50 L1273.50 219.50 Z" fill="#CCA300" fill-opacity="0.1" stroke="none"/><path d="M1273.50 205.74 L1278.71 207.19 L1293.60 206.20 L1308.49 206.29 L1323.37 207.87 L1338.26 207.02 L1353.15 207.20 L1368.04 207.83 L1382.92 208.32 L1397.81 206.82 L1412.70 207.36 L1427.59 207.02 L1442.47 207.04 L1457.36 201.50 L1472.25 206.85 L1487.14 207.11 L1502.03 206.93 L1516.91 209.50 L1531.80 207.64 L1546.69 208.20 L1561.58 208.41 L1576.46 206.23 L1591.35 207.19 L1606.24 208.42 L1621.13 208.09 L1636.01 205.84 L1650.90 205.79 L1665.79 206.81 L1680.68 205.63 L1695.56 206.17 L1710.45 205.63 L1725.34 207.54 L1740.23 207.91 L1755.12 208.27 L1770.00 205.89 L1784.89 207.69 L1799.78 207.51 L1814.67 205.86" fill="none" stroke="#CCA300" stroke-width="1.0" stroke-linejoin="round"/></g><text x="1268.50" y="90.10" font-size="11" text-anchor="end" textLength="15" lengthAdjust="spacingAndGlyphs" fill="#ccccdc">6%</text><text x="1268.50" y="112.10" font-size="11" text-anchor="end" textLength="15" lengthAdjust="spacingAndGlyphs" fill="#ccccdc">5%</text><text x="1268.50" y="134.10" font-size="11" text-anchor="end" textLength="15" lengthAdjust="spacingAndGlyphs" fill="#ccccdc">4%</text><text x="1268.50" y="156.10" font-size="11" text-anchor="end" textLength="15" lengthAdjust="spacingAndGlyphs" fill="#ccccdc">3%</text><text x="1268.50" y="178.10" font-size="11" text-anchor="end" textLength="15" lengthAdjust="spacingAndGlyphs" fill="#ccccdc">2%</text><text x="1268.50" y="200.10" font-size="11" text-anchor="end" textLength="15" lengthAdjust="spacingAndGlyphs" fill="#ccccdc">1%</text><text x="1268.50" y="222.10" font-size="11" text-anchor="end" textLength="15" lengthAdjust="spacingAndGlyphs" fill="#ccccdc">0%</text><text x="1308.49" y="235.70" font-size="11" text-anchor="middle" textLength="26" lengthAdjust="spacingAndGlyphs" fill="#ccccdc">15:15</text><text x="1397.81" y="235.70" font-size="11" text-anchor="middle" textLength="26" lengthAdjust="spacingAndGlyphs" fill="#ccccdc">15:16</text><text x="1487.14" y="235.70" font-size="11" text-anchor="middle" textLength="26" lengthAdjust="spacingAndGlyphs" fill="#ccccdc">15:17</text><text x="1576.46" y="235.70" font-size="11" text-anchor="middle" textLength="26" lengthAdjust="spacingAndGlyphs" fill="#ccccdc">15:18</text><text x="1665.79" y="235.70" font-size="11" text-anchor="middle" textLength="26" lengthAdjust="spacingAndGlyphs" fill="#ccccdc">15:19</text><text x="1755.12" y="235.70" font-size="11" text-anchor="middle" textLength="26" lengthAdjust="spacingAndGlyphs" fill="#ccccdc">15:20</text><rect x="1261" y="255" width="13" height="4" rx="1.2" fill="#7EB26D"/><text x="1286.50" y="259.00" font-size="11" textLength="19.5" lengthAdjust="spacingAndGlyphs" fill="#ccccdc">sda</text><rect x="1319.4" y="255" width="13" height="4" rx="1.2" fill="#EAB839"/><text x="1345.00" y="259.00" font-size="11" textLength="20" lengthAdjust="spacingAndGlyphs" fill="#ccccdc">sdb</text><rect x="1378.5" y="255" width="13" height="4" rx="1.2" fill="#6ED0E0"/><text x="1404.00" y="259.00" font-size="11" textLength="19" lengthAdjust="spacingAndGlyphs" fill="#ccccdc">sdc</text><rect x="1437" y="255" width="13" height="4" rx="1.2" fill="#EF843C"/><text x="1462.60" y="259.00" font-size="11" textLength="20" lengthAdjust="spacingAndGlyphs" fill="#ccccdc">sdd</text><rect x="1495.8" y="255" width="13" height="4" rx="1.2" fill="#E24D42"/><text x="1521.00" y="259.00" font-size="11" textLength="19.5" lengthAdjust="spacingAndGlyphs" fill="#ccccdc">sde</text><rect x="1554" y="255" width="13" height="4" rx="1.2" fill="#1F78C1"/><text x="1579.50" y="259.00" font-size="11" textLength="19.8" lengthAdjust="spacingAndGlyphs" fill="#ccccdc">sdg</text><rect x="1613.3" y="255" width="13" height="4" rx="1.2" fill="#BA43A9"/><text x="1638.30" y="259.00" font-size="11" textLength="19.5" lengthAdjust="spacingAndGlyphs" fill="#ccccdc">sdh</text><rect x="1671.8" y="255" width="13" height="4" rx="1.2" fill="#705DA0"/><text x="1696.80" y="259.00" font-size="11" textLength="15.5" lengthAdjust="spacingAndGlyphs" fill="#ccccdc">sdi</text><rect x="1726.6" y="255" width="13" height="4" rx="1.2" fill="#508642"/><text x="1751.90" y="259.00" font-size="11" textLength="15.2" lengthAdjust="spacingAndGlyphs" fill="#ccccdc">sdj</text><rect x="1781.5" y="255" width="13" height="4" rx="1.2" fill="#CCA300"/><text x="1806.70" y="259.00" font-size="11" textLength="15.5" lengthAdjust="spacingAndGlyphs" fill="#ccccdc">sdl</text><rect x="12.5" y="281.5" width="607" height="231" rx="2" ry="2" fill="#1a1a1a" stroke="#262c2e" stroke-width="1"/><text x="316.00" y="300.00" font-size="13" text-anchor="middle" font-weight="500" textLength="157" lengthAdjust="spacingAndGlyphs" fill="#ccccdc" stroke="#ccccdc" stroke-width="0.35">Per Disk Throughput write</text><path d="M66.8 327.30H598M66.8 355.73H598M66.8 384.15H598M66.8 412.57H598M66.8 441.00H598M100.20 327.3V441M185.46 327.3V441M270.73 327.3V441M355.99 327.3V441M441.25 327.3V441M526.52 327.3V441" stroke="#9cc8d8" stroke-opacity="0.155" stroke-width="1" fill="none"/><clipPath id="clip4"><rect x="66.8" y="325.3" width="531.2" height="116.19999999999999"/></clipPath><g clip-path="url(#clip4)"><path d="M66.80 382.00 L71.77 372.00 L85.98 375.72 L100.20 378.08 L114.41 337.20 L128.62 377.76 L142.83 363.46 L157.04 337.50 L171.25 378.09 L185.46 377.38 L199.67 381.41 L213.88 368.81 L228.09 348.10 L242.30 370.95 L256.51 358.00 L270.73 382.18 L284.94 373.21 L299.15 376.47 L313.36 377.47 L327.57 387.66 L341.78 385.25 L355.99 362.55 L370.20 372.75 L384.41 362.22 L398.62 369.88 L412.83 362.03 L427.04 360.03 L441.25 373.94 L455.47 356.35 L469.68 343.10 L483.89 368.72 L498.10 366.96 L512.31 357.63 L526.52 368.38 L540.73 361.63 L554.94 363.85 L569.15 356.28 L583.36 368.06 L583.36 441.00 L66.80 441.00 Z" fill="#7EB26D" fill-opacity="0.1" stroke="none"/><path d="M66.80 382.00 L71.77 372.00 L85.98 375.72 L100.20 378.08 L114.41 337.20 L128.62 377.76 L142.83 363.46 L157.04 337.50 L171.25 378.09 L185.46 377.38 L199.67 381.41 L213.88 368.81 L228.09 348.10 L242.30 370.95 L256.51 358.00 L270.73 382.18 L284.94 373.21 L299.15 376.47 L313.36 377.47 L327.57 387.66 L341.78 385.25 L355.99 362.55 L370.20 372.75 L384.41 362.22 L398.62 369.88 L412.83 362.03 L427.04 360.03 L441.25 373.94 L455.47 356.35 L469.68 343.10 L483.89 368.72 L498.10 366.96 L512.31 357.63 L526.52 368.38 L540.73 361.63 L554.94 363.85 L569.15 356.28 L583.36 368.06" fill="none" stroke="#7EB26D" stroke-width="1.0" stroke-linejoin="round"/><path d="M66.80 394.00 L71.77 375.00 L85.98 377.30 L100.20 367.78 L114.41 368.78 L128.62 365.66 L142.83 365.33 L157.04 352.70 L171.25 367.82 L185.46 376.65 L199.67 344.10 L213.88 377.85 L228.09 372.41 L242.30 355.40 L256.51 386.10 L270.73 360.00 L284.94 378.05 L299.15 380.70 L313.36 384.27 L327.57 373.91 L341.78 353.80 L355.99 384.40 L370.20 372.00 L384.41 373.52 L398.62 360.29 L412.83 372.60 L427.04 365.86 L441.25 391.00 L455.47 347.20 L469.68 353.75 L483.89 336.50 L498.10 368.28 L512.31 356.14 L526.52 365.09 L540.73 367.87 L554.94 368.07 L569.15 358.51 L583.36 358.68 L583.36 441.00 L66.80 441.00 Z" fill="#EAB839" fill-opacity="0.1" stroke="none"/><path d="M66.80 394.00 L71.77 375.00 L85.98 377.30 L100.20 367.78 L114.41 368.78 L128.62 365.66 L142.83 365.33 L157.04 352.70 L171.25 367.82 L185.46 376.65 L199.67 344.10 L213.88 377.85 L228.09 372.41 L242.30 355.40 L256.51 386.10 L270.73 360.00 L284.94 378.05 L299.15 380.70 L313.36 384.27 L327.57 373.91 L341.78 353.80 L355.99 384.40 L370.20 372.00 L384.41 373.52 L398.62 360.29 L412.83 372.60 L427.04 365.86 L441.25 391.00 L455.47 347.20 L469.68 353.75 L483.89 336.50 L498.10 368.28 L512.31 356.14 L526.52 365.09 L540.73 367.87 L554.94 368.07 L569.15 358.51 L583.36 358.68" fill="none" stroke="#EAB839" stroke-width="1.0" stroke-linejoin="round"/><path d="M66.80 405.00 L71.77 404.20 L85.98 364.73 L100.20 374.97 L114.41 375.76 L128.62 376.76 L142.83 363.59 L157.04 378.13 L171.25 364.46 L185.46 372.45 L199.67 376.77 L213.88 381.69 L228.09 372.44 L242.30 381.79 L256.51 357.40 L270.73 378.00 L284.94 378.07 L299.15 365.30 L313.36 374.25 L327.57 358.80 L341.78 383.60 L355.99 375.95 L370.20 362.58 L384.41 360.78 L398.62 375.79 L412.83 368.54 L427.04 366.49 L441.25 363.80 L455.47 362.50 L469.68 366.22 L483.89 360.29 L498.10 359.75 L512.31 353.89 L526.52 367.66 L540.73 353.52 L554.94 360.90 L569.15 366.41 L583.36 355.09 L583.36 441.00 L66.80 441.00 Z" fill="#6ED0E0" fill-opacity="0.1" stroke="none"/><path d="M66.80 405.00 L71.77 404.20 L85.98 364.73 L100.20 374.97 L114.41 375.76 L128.62 376.76 L142.83 363.59 L157.04 378.13 L171.25 364.46 L185.46 372.45 L199.67 376.77 L213.88 381.69 L228.09 372.44 L242.30 381.79 L256.51 357.40 L270.73 378.00 L284.94 378.07 L299.15 365.30 L313.36 374.25 L327.57 358.80 L341.78 383.60 L355.99 375.95 L370.20 362.58 L384.41 360.78 L398.62 375.79 L412.83 368.54 L427.04 366.49 L441.25 363.80 L455.47 362.50 L469.68 366.22 L483.89 360.29 L498.10 359.75 L512.31 353.89 L526.52 367.66 L540.73 353.52 L554.94 360.90 L569.15 366.41 L583.36 355.09" fill="none" stroke="#6ED0E0" stroke-width="1.0" stroke-linejoin="round"/><path d="M66.80 400.00 L71.77 414.80 L85.98 373.09 L100.20 375.61 L114.41 364.71 L128.62 369.95 L142.83 386.40 L157.04 376.52 L171.25 367.72 L185.46 374.25 L199.67 382.99 L213.88 380.64 L228.09 382.62 L242.30 374.26 L256.51 380.81 L270.73 389.80 L284.94 380.66 L299.15 401.60 L313.36 368.60 L327.57 375.34 L341.78 379.03 L355.99 375.81 L370.20 375.36 L384.41 370.03 L398.62 367.99 L412.83 365.42 L427.04 361.43 L441.25 364.36 L455.47 365.51 L469.68 366.88 L483.89 358.78 L498.10 365.58 L512.31 365.40 L526.52 364.11 L540.73 363.62 L554.94 349.00 L569.15 358.81 L583.36 364.27 L583.36 441.00 L66.80 441.00 Z" fill="#EF843C" fill-opacity="0.1" stroke="none"/><path d="M66.80 400.00 L71.77 414.80 L85.98 373.09 L100.20 375.61 L114.41 364.71 L128.62 369.95 L142.83 386.40 L157.04 376.52 L171.25 367.72 L185.46 374.25 L199.67 382.99 L213.88 380.64 L228.09 382.62 L242.30 374.26 L256.51 380.81 L270.73 389.80 L284.94 380.66 L299.15 401.60 L313.36 368.60 L327.57 375.34 L341.78 379.03 L355.99 375.81 L370.20 375.36 L384.41 370.03 L398.62 367.99 L412.83 365.42 L427.04 361.43 L441.25 364.36 L455.47 365.51 L469.68 366.88 L483.89 358.78 L498.10 365.58 L512.31 365.40 L526.52 364.11 L540.73 363.62 L554.94 349.00 L569.15 358.81 L583.36 364.27" fill="none" stroke="#EF843C" stroke-width="1.0" stroke-linejoin="round"/><path d="M66.80 390.00 L71.77 394.66 L85.98 375.32 L100.20 349.40 L114.41 367.70 L128.62 378.13 L142.83 373.40 L157.04 346.80 L171.25 363.19 L185.46 375.75 L199.67 371.01 L213.88 377.75 L228.09 374.41 L242.30 380.07 L256.51 347.50 L270.73 385.76 L284.94 378.57 L299.15 383.31 L313.36 384.81 L327.57 386.25 L341.78 378.60 L355.99 373.49 L370.20 373.92 L384.41 371.01 L398.62 375.62 L412.83 388.50 L427.04 344.00 L441.25 368.47 L455.47 355.66 L469.68 366.39 L483.89 348.00 L498.10 360.64 L512.31 364.06 L526.52 364.51 L540.73 364.69 L554.94 355.75 L569.15 365.49 L583.36 343.00 L583.36 441.00 L66.80 441.00 Z" fill="#E24D42" fill-opacity="0.1" stroke="none"/><path d="M66.80 390.00 L71.77 394.66 L85.98 375.32 L100.20 349.40 L114.41 367.70 L128.62 378.13 L142.83 373.40 L157.04 346.80 L171.25 363.19 L185.46 375.75 L199.67 371.01 L213.88 377.75 L228.09 374.41 L242.30 380.07 L256.51 347.50 L270.73 385.76 L284.94 378.57 L299.15 383.31 L313.36 384.81 L327.57 386.25 L341.78 378.60 L355.99 373.49 L370.20 373.92 L384.41 371.01 L398.62 375.62 L412.83 388.50 L427.04 344.00 L441.25 368.47 L455.47 355.66 L469.68 366.39 L483.89 348.00 L498.10 360.64 L512.31 364.06 L526.52 364.51 L540.73 364.69 L554.94 355.75 L569.15 365.49 L583.36 343.00" fill="none" stroke="#E24D42" stroke-width="1.0" stroke-linejoin="round"/><path d="M66.80 392.00 L71.77 393.10 L85.98 372.98 L100.20 375.40 L114.41 393.70 L128.62 374.53 L142.83 363.44 L157.04 365.56 L171.25 385.70 L185.46 377.40 L199.67 370.50 L213.88 377.98 L228.09 391.00 L242.30 367.67 L256.51 394.40 L270.73 376.62 L284.94 373.87 L299.15 375.14 L313.36 378.08 L327.57 375.90 L341.78 376.09 L355.99 350.50 L370.20 367.45 L384.41 366.08 L398.62 369.79 L412.83 369.44 L427.04 363.81 L441.25 374.45 L455.47 353.01 L469.68 359.49 L483.89 357.46 L498.10 359.56 L512.31 389.30 L526.52 366.30 L540.73 358.98 L554.94 381.00 L569.15 362.82 L583.36 377.80 L583.36 441.00 L66.80 441.00 Z" fill="#1F78C1" fill-opacity="0.1" stroke="none"/><path d="M66.80 392.00 L71.77 393.10 L85.98 372.98 L100.20 375.40 L114.41 393.70 L128.62 374.53 L142.83 363.44 L157.04 365.56 L171.25 385.70 L185.46 377.40 L199.67 370.50 L213.88 377.98 L228.09 391.00 L242.30 367.67 L256.51 394.40 L270.73 376.62 L284.94 373.87 L299.15 375.14 L313.36 378.08 L327.57 375.90 L341.78 376.09 L355.99 350.50 L370.20 367.45 L384.41 366.08 L398.62 369.79 L412.83 369.44 L427.04 363.81 L441.25 374.45 L455.47 353.01 L469.68 359.49 L483.89 357.46 L498.10 359.56 L512.31 389.30 L526.52 366.30 L540.73 358.98 L554.94 381.00 L569.15 362.82 L583.36 377.80" fill="none" stroke="#1F78C1" stroke-width="1.0" stroke-linejoin="round"/><path d="M66.80 408.00 L71.77 418.00 L85.98 372.29 L100.20 378.33 L114.41 376.10 L128.62 369.71 L142.83 376.01 L157.04 373.28 L171.25 368.91 L185.46 369.27 L199.67 376.54 L213.88 376.02 L228.09 382.32 L242.30 382.49 L256.51 382.74 L270.73 378.62 L284.94 387.30 L299.15 373.02 L313.36 402.30 L327.57 382.05 L341.78 382.84 L355.99 362.25 L370.20 370.07 L384.41 374.26 L398.62 366.01 L412.83 366.91 L427.04 363.62 L441.25 364.66 L455.47 385.20 L469.68 349.70 L483.89 382.00 L498.10 367.62 L512.31 362.53 L526.52 357.16 L540.73 368.70 L554.94 360.94 L569.15 377.00 L583.36 358.11 L583.36 441.00 L66.80 441.00 Z" fill="#BA43A9" fill-opacity="0.1" stroke="none"/><path d="M66.80 408.00 L71.77 418.00 L85.98 372.29 L100.20 378.33 L114.41 376.10 L128.62 369.71 L142.83 376.01 L157.04 373.28 L171.25 368.91 L185.46 369.27 L199.67 376.54 L213.88 376.02 L228.09 382.32 L242.30 382.49 L256.51 382.74 L270.73 378.62 L284.94 387.30 L299.15 373.02 L313.36 402.30 L327.57 382.05 L341.78 382.84 L355.99 362.25 L370.20 370.07 L384.41 374.26 L398.62 366.01 L412.83 366.91 L427.04 363.62 L441.25 364.66 L455.47 385.20 L469.68 349.70 L483.89 382.00 L498.10 367.62 L512.31 362.53 L526.52 357.16 L540.73 368.70 L554.94 360.94 L569.15 377.00 L583.36 358.11" fill="none" stroke="#BA43A9" stroke-width="1.0" stroke-linejoin="round"/><path d="M66.80 392.00 L71.77 394.80 L85.98 367.58 L100.20 370.63 L114.41 364.95 L128.62 393.00 L142.83 370.10 L157.04 381.80 L171.25 375.51 L185.46 380.23 L199.67 367.21 L213.88 375.52 L228.09 371.38 L242.30 381.96 L256.51 385.51 L270.73 376.93 L284.94 377.28 L299.15 411.60 L313.36 389.00 L327.57 348.10 L341.78 382.73 L355.99 367.59 L370.20 370.32 L384.41 347.20 L398.62 371.90 L412.83 361.89 L427.04 389.30 L441.25 344.80 L455.47 361.54 L469.68 358.38 L483.89 357.75 L498.10 336.50 L512.31 360.43 L526.52 358.78 L540.73 364.92 L554.94 362.45 L569.15 350.50 L583.36 357.04 L583.36 441.00 L66.80 441.00 Z" fill="#705DA0" fill-opacity="0.1" stroke="none"/><path d="M66.80 392.00 L71.77 394.80 L85.98 367.58 L100.20 370.63 L114.41 364.95 L128.62 393.00 L142.83 370.10 L157.04 381.80 L171.25 375.51 L185.46 380.23 L199.67 367.21 L213.88 375.52 L228.09 371.38 L242.30 381.96 L256.51 385.51 L270.73 376.93 L284.94 377.28 L299.15 411.60 L313.36 389.00 L327.57 348.10 L341.78 382.73 L355.99 367.59 L370.20 370.32 L384.41 347.20 L398.62 371.90 L412.83 361.89 L427.04 389.30 L441.25 344.80 L455.47 361.54 L469.68 358.38 L483.89 357.75 L498.10 336.50 L512.31 360.43 L526.52 358.78 L540.73 364.92 L554.94 362.45 L569.15 350.50 L583.36 357.04" fill="none" stroke="#705DA0" stroke-width="1.0" stroke-linejoin="round"/><path d="M66.80 388.00 L71.77 405.00 L85.98 377.21 L100.20 371.73 L114.41 363.23 L128.62 375.45 L142.83 369.84 L157.04 372.21 L171.25 374.33 L185.46 377.12 L199.67 374.71 L213.88 393.00 L228.09 396.30 L242.30 373.27 L256.51 397.70 L270.73 376.14 L284.94 377.74 L299.15 386.28 L313.36 374.06 L327.57 344.80 L341.78 384.11 L355.99 366.93 L370.20 349.70 L384.41 345.60 L398.62 374.57 L412.83 344.80 L427.04 367.65 L441.25 368.79 L455.47 360.96 L469.68 358.29 L483.89 355.46 L498.10 362.37 L512.31 365.99 L526.52 354.09 L540.73 340.60 L554.94 342.00 L569.15 343.00 L583.36 341.00 L583.36 441.00 L66.80 441.00 Z" fill="#508642" fill-opacity="0.1" stroke="none"/><path d="M66.80 388.00 L71.77 405.00 L85.98 377.21 L100.20 371.73 L114.41 363.23 L128.62 375.45 L142.83 369.84 L157.04 372.21 L171.25 374.33 L185.46 377.12 L199.67 374.71 L213.88 393.00 L228.09 396.30 L242.30 373.27 L256.51 397.70 L270.73 376.14 L284.94 377.74 L299.15 386.28 L313.36 374.06 L327.57 344.80 L341.78 384.11 L355.99 366.93 L370.20 349.70 L384.41 345.60 L398.62 374.57 L412.83 344.80 L427.04 367.65 L441.25 368.79 L455.47 360.96 L469.68 358.29 L483.89 355.46 L498.10 362.37 L512.31 365.99 L526.52 354.09 L540.73 340.60 L554.94 342.00 L569.15 343.00 L583.36 341.00" fill="none" stroke="#508642" stroke-width="1.0" stroke-linejoin="round"/><path d="M66.80 396.00 L71.77 400.34 L85.98 378.66 L100.20 378.97 L114.41 374.22 L128.62 363.78 L142.83 376.47 L157.04 366.51 L171.25 373.33 L185.46 389.70 L199.67 378.40 L213.88 369.15 L228.09 371.68 L242.30 381.69 L256.51 375.40 L270.73 382.77 L284.94 379.62 L299.15 375.58 L313.36 382.96 L327.57 373.70 L341.78 374.73 L355.99 366.07 L370.20 396.00 L384.41 360.92 L398.62 369.20 L412.83 371.88 L427.04 374.06 L441.25 362.15 L455.47 359.91 L469.68 358.03 L483.89 362.60 L498.10 360.83 L512.31 368.02 L526.52 358.99 L540.73 380.80 L554.94 364.16 L569.15 355.42 L583.36 363.10 L583.36 441.00 L66.80 441.00 Z" fill="#CCA300" fill-opacity="0.1" stroke="none"/><path d="M66.80 396.00 L71.77 400.34 L85.98 378.66 L100.20 378.97 L114.41 374.22 L128.62 363.78 L142.83 376.47 L157.04 366.51 L171.25 373.33 L185.46 389.70 L199.67 378.40 L213.88 369.15 L228.09 371.68 L242.30 381.69 L256.51 375.40 L270.73 382.77 L284.94 379.62 L299.15 375.58 L313.36 382.96 L327.57 373.70 L341.78 374.73 L355.99 366.07 L370.20 396.00 L384.41 360.92 L398.62 369.20 L412.83 371.88 L427.04 374.06 L441.25 362.15 L455.47 359.91 L469.68 358.03 L483.89 362.60 L498.10 360.83 L512.31 368.02 L526.52 358.99 L540.73 380.80 L554.94 364.16 L569.15 355.42 L583.36 363.10" fill="none" stroke="#CCA300" stroke-width="1.0" stroke-linejoin="round"/><path d="M66.80 400.00 L71.77 404.85 L85.98 371.88 L100.20 372.93 L114.41 367.21 L128.62 371.83 L142.83 367.07 L157.04 375.01 L171.25 371.27 L185.46 369.14 L199.67 370.75 L213.88 372.94 L228.09 378.79 L242.30 369.87 L256.51 404.30 L270.73 383.48 L284.94 374.36 L299.15 383.69 L313.36 374.46 L327.57 375.00 L341.78 382.50 L355.99 363.82 L370.20 374.03 L384.41 367.69 L398.62 365.17 L412.83 372.74 L427.04 360.47 L441.25 371.60 L455.47 353.86 L469.68 355.41 L483.89 368.23 L498.10 363.90 L512.31 356.57 L526.52 354.86 L540.73 368.56 L554.94 363.64 L569.15 366.13 L583.36 355.24 L583.36 441.00 L66.80 441.00 Z" fill="#447EBC" fill-opacity="0.1" stroke="none"/><path d="M66.80 400.00 L71.77 404.85 L85.98 371.88 L100.20 372.93 L114.41 367.21 L128.62 371.83 L142.83 367.07 L157.04 375.01 L171.25 371.27 L185.46 369.14 L199.67 370.75 L213.88 372.94 L228.09 378.79 L242.30 369.87 L256.51 404.30 L270.73 383.48 L284.94 374.36 L299.15 383.69 L313.36 374.46 L327.57 375.00 L341.78 382.50 L355.99 363.82 L370.20 374.03 L384.41 367.69 L398.62 365.17 L412.83 372.74 L427.04 360.47 L441.25 371.60 L455.47 353.86 L469.68 355.41 L483.89 368.23 L498.10 363.90 L512.31 356.57 L526.52 354.86 L540.73 368.56 L554.94 363.64 L569.15 366.13 L583.36 355.24" fill="none" stroke="#447EBC" stroke-width="1.0" stroke-linejoin="round"/></g><text x="61.50" y="329.90" font-size="11" text-anchor="end" fill="#ccccdc">3</text><text x="61.50" y="358.33" font-size="11" text-anchor="end" textLength="21.7" lengthAdjust="spacingAndGlyphs" fill="#ccccdc">2.50</text><text x="61.50" y="386.75" font-size="11" text-anchor="end" fill="#ccccdc">2</text><text x="61.50" y="415.18" font-size="11" text-anchor="end" textLength="20.8" lengthAdjust="spacingAndGlyphs" fill="#ccccdc">1.50</text><text x="61.50" y="443.60" font-size="11" text-anchor="end" fill="#ccccdc">1</text><text x="100.20" y="457.20" font-size="11" text-anchor="middle" textLength="26" lengthAdjust="spacingAndGlyphs" fill="#ccccdc">15:15</text><text x="185.46" y="457.20" font-size="11" text-anchor="middle" textLength="26" lengthAdjust="spacingAndGlyphs" fill="#ccccdc">15:16</text><text x="270.73" y="457.20" font-size="11" text-anchor="middle" textLength="26" lengthAdjust="spacingAndGlyphs" fill="#ccccdc">15:17</text><text x="355.99" y="457.20" font-size="11" text-anchor="middle" textLength="26" lengthAdjust="spacingAndGlyphs" fill="#ccccdc">15:18</text><text x="441.25" y="457.20" font-size="11" text-anchor="middle" textLength="26" lengthAdjust="spacingAndGlyphs" fill="#ccccdc">15:19</text><text x="526.52" y="457.20" font-size="11" text-anchor="middle" textLength="26" lengthAdjust="spacingAndGlyphs" fill="#ccccdc">15:20</text><text x="0" y="0" font-size="11" fill="#ccccdc" text-anchor="middle" transform="translate(30,390) rotate(-90)" textLength="28.3" lengthAdjust="spacingAndGlyphs">ops/s</text><rect x="29" y="476" width="13" height="4" rx="1.2" fill="#7EB26D"/><text x="54.50" y="480.00" font-size="11" textLength="33.3" lengthAdjust="spacingAndGlyphs" fill="#ccccdc">sdc-w</text><rect x="101.2" y="476" width="13" height="4" rx="1.2" fill="#EAB839"/><text x="126.50" y="480.00" font-size="11" textLength="34.2" lengthAdjust="spacingAndGlyphs" fill="#ccccdc">sdd-w</text><rect x="174" y="476" width="13" height="4" rx="1.2" fill="#6ED0E0"/><text x="199.70" y="480.00" font-size="11" textLength="30.5" lengthAdjust="spacingAndGlyphs" fill="#ccccdc">sdf-w</text><rect x="244.3" y="476" width="13" height="4" rx="1.2" fill="#EF843C"/><text x="269.50" y="480.00" font-size="11" textLength="33.3" lengthAdjust="spacingAndGlyphs" fill="#ccccdc">sdh-w</text><rect x="316.6" y="476" width="13" height="4" rx="1.2" fill="#E24D42"/><text x="341.90" y="480.00" font-size="11" textLength="29.6" lengthAdjust="spacingAndGlyphs" fill="#ccccdc">sdi-w</text><rect x="385" y="476" width="13" height="4" rx="1.2" fill="#1F78C1"/><text x="410.50" y="480.00" font-size="11" textLength="29.6" lengthAdjust="spacingAndGlyphs" fill="#ccccdc">sdj-w</text><rect x="454.2" y="476" width="13" height="4" rx="1.2" fill="#BA43A9"/><text x="479.20" y="480.00" font-size="11" textLength="33" lengthAdjust="spacingAndGlyphs" fill="#ccccdc">sdk-w</text><rect x="526" y="476" width="13" height="4" rx="1.2" fill="#705DA0"/><text x="551.20" y="480.00" font-size="11" textLength="29.6" lengthAdjust="spacingAndGlyphs" fill="#ccccdc">sdl-w</text><rect x="29" y="495" width="13" height="4" rx="1.2" fill="#508642"/><text x="54.50" y="499.00" font-size="11" textLength="36.4" lengthAdjust="spacingAndGlyphs" fill="#ccccdc">sdm-w</text><rect x="105" y="495" width="13" height="4" rx="1.2" fill="#CCA300"/><text x="130.50" y="499.00" font-size="11" textLength="33.3" lengthAdjust="spacingAndGlyphs" fill="#ccccdc">sdn-w</text><rect x="177" y="495" width="13" height="4" rx="1.2" fill="#447EBC"/><text x="202.80" y="499.00" font-size="11" textLength="33.3" lengthAdjust="spacingAndGlyphs" fill="#ccccdc">sdg-w</text><rect x="627.5" y="281.5" width="608" height="231" rx="2" ry="2" fill="#1a1a1a" stroke="#262c2e" stroke-width="1"/><text x="931.50" y="300.00" font-size="13" text-anchor="middle" font-weight="500" textLength="153" lengthAdjust="spacingAndGlyphs" fill="#ccccdc" stroke="#ccccdc" stroke-width="0.35">Per Disk Throughput read</text><path d="M693.2 327.30H1213M693.2 355.73H1213M693.2 384.15H1213M693.2 412.57H1213M693.2 441.00H1213M725.88 327.3V441M809.31 327.3V441M892.75 327.3V441M976.18 327.3V441M1059.62 327.3V441M1143.05 327.3V441" stroke="#9cc8d8" stroke-opacity="0.155" stroke-width="1" fill="none"/><clipPath id="clip5"><rect x="693.2" y="325.3" width="519.8" height="116.19999999999999"/></clipPath><g clip-path="url(#clip5)"><path d="M693.20 384.20 L698.07 384.20 L711.97 384.20 L725.88 384.20 L739.78 384.20 L753.69 384.20 L767.60 384.20 L781.50 384.20 L795.41 384.20 L809.31 384.20 L823.22 384.20 L837.13 384.20 L851.03 384.20 L864.94 384.20 L878.84 384.20 L892.75 384.20 L906.65 384.20 L920.56 384.20 L934.47 384.20 L948.37 384.20 L962.28 384.20 L976.18 384.20 L990.09 384.20 L1004.00 384.20 L1017.90 384.20 L1031.81 384.20 L1045.71 384.20 L1059.62 384.20 L1073.52 384.20 L1087.43 384.20 L1101.34 384.20 L1115.24 384.20 L1129.15 384.20 L1143.05 384.20 L1156.96 384.20 L1170.87 384.20 L1184.77 384.20 L1198.68 384.20" fill="none" stroke="#7EB26D" stroke-width="1.0" stroke-linejoin="round"/><path d="M693.20 384.20 L698.07 384.20 L711.97 384.20 L725.88 384.20 L739.78 384.20 L753.69 384.20 L767.60 384.20 L781.50 384.20 L795.41 384.20 L809.31 384.20 L823.22 384.20 L837.13 384.20 L851.03 384.20 L864.94 384.20 L878.84 384.20 L892.75 384.20 L906.65 384.20 L920.56 384.20 L934.47 384.20 L948.37 384.20 L962.28 384.20 L976.18 384.20 L990.09 384.20 L1004.00 384.20 L1017.90 384.20 L1031.81 384.20 L1045.71 384.20 L1059.62 384.20 L1073.52 384.20 L1087.43 384.20 L1101.34 384.20 L1115.24 384.20 L1129.15 384.20 L1143.05 384.20 L1156.96 384.20 L1170.87 384.20 L1184.77 384.20 L1198.68 384.20" fill="none" stroke="#EAB839" stroke-width="1.0" stroke-linejoin="round"/><path d="M693.20 384.20 L698.07 384.20 L711.97 384.20 L725.88 384.20 L739.78 384.20 L753.69 384.20 L767.60 384.20 L781.50 384.20 L795.41 384.20 L809.31 384.20 L823.22 384.20 L837.13 384.20 L851.03 384.20 L864.94 384.20 L878.84 384.20 L892.75 384.20 L906.65 384.20 L920.56 384.20 L934.47 384.20 L948.37 384.20 L962.28 384.20 L976.18 384.20 L990.09 384.20 L1004.00 384.20 L1017.90 384.20 L1031.81 384.20 L1045.71 384.20 L1059.62 384.20 L1073.52 384.20 L1087.43 384.20 L1101.34 384.20 L1115.24 384.20 L1129.15 384.20 L1143.05 384.20 L1156.96 384.20 L1170.87 384.20 L1184.77 384.20 L1198.68 384.20" fill="none" stroke="#6ED0E0" stroke-width="1.0" stroke-linejoin="round"/><path d="M693.20 384.20 L698.07 384.20 L711.97 384.20 L725.88 384.20 L739.78 384.20 L753.69 384.20 L767.60 384.20 L781.50 384.20 L795.41 384.20 L809.31 384.20 L823.22 384.20 L837.13 384.20 L851.03 384.20 L864.94 384.20 L878.84 384.20 L892.75 384.20 L906.65 384.20 L920.56 384.20 L934.47 384.20 L948.37 384.20 L962.28 384.20 L976.18 384.20 L990.09 384.20 L1004.00 384.20 L1017.90 384.20 L1031.81 384.20 L1045.71 384.20 L1059.62 384.20 L1073.52 384.20 L1087.43 384.20 L1101.34 384.20 L1115.24 384.20 L1129.15 384.20 L1143.05 384.20 L1156.96 384.20 L1170.87 384.20 L1184.77 384.20 L1198.68 384.20" fill="none" stroke="#EF843C" stroke-width="1.0" stroke-linejoin="round"/><path d="M693.20 384.20 L698.07 384.20 L711.97 384.20 L725.88 384.20 L739.78 384.20 L753.69 384.20 L767.60 384.20 L781.50 384.20 L795.41 384.20 L809.31 384.20 L823.22 384.20 L837.13 384.20 L851.03 384.20 L864.94 384.20 L878.84 384.20 L892.75 384.20 L906.65 384.20 L920.56 384.20 L934.47 384.20 L948.37 384.20 L962.28 384.20 L976.18 384.20 L990.09 384.20 L1004.00 384.20 L1017.90 384.20 L1031.81 384.20 L1045.71 384.20 L1059.62 384.20 L1073.52 384.20 L1087.43 384.20 L1101.34 384.20 L1115.24 384.20 L1129.15 384.20 L1143.05 384.20 L1156.96 384.20 L1170.87 384.20 L1184.77 384.20 L1198.68 384.20" fill="none" stroke="#E24D42" stroke-width="1.0" stroke-linejoin="round"/><path d="M693.20 384.20 L698.07 384.20 L711.97 384.20 L725.88 384.20 L739.78 384.20 L753.69 384.20 L767.60 384.20 L781.50 384.20 L795.41 384.20 L809.31 384.20 L823.22 384.20 L837.13 384.20 L851.03 384.20 L864.94 384.20 L878.84 384.20 L892.75 384.20 L906.65 384.20 L920.56 384.20 L934.47 384.20 L948.37 384.20 L962.28 384.20 L976.18 384.20 L990.09 384.20 L1004.00 384.20 L1017.90 384.20 L1031.81 384.20 L1045.71 384.20 L1059.62 384.20 L1073.52 384.20 L1087.43 384.20 L1101.34 384.20 L1115.24 384.20 L1129.15 384.20 L1143.05 384.20 L1156.96 384.20 L1170.87 384.20 L1184.77 384.20 L1198.68 384.20" fill="none" stroke="#1F78C1" stroke-width="1.0" stroke-linejoin="round"/><path d="M693.20 384.20 L698.07 384.20 L711.97 384.20 L725.88 384.20 L739.78 384.20 L753.69 384.20 L767.60 384.20 L781.50 384.20 L795.41 384.20 L809.31 384.20 L823.22 384.20 L837.13 384.20 L851.03 384.20 L864.94 384.20 L878.84 384.20 L892.75 384.20 L906.65 384.20 L920.56 384.20 L934.47 384.20 L948.37 384.20 L962.28 384.20 L976.18 384.20 L990.09 384.20 L1004.00 384.20 L1017.90 384.20 L1031.81 384.20 L1045.71 384.20 L1059.62 384.20 L1073.52 384.20 L1087.43 384.20 L1101.34 384.20 L1115.24 384.20 L1129.15 384.20 L1143.05 384.20 L1156.96 384.20 L1170.87 384.20 L1184.77 384.20 L1198.68 384.20" fill="none" stroke="#BA43A9" stroke-width="1.0" stroke-linejoin="round"/><path d="M693.20 384.20 L698.07 384.20 L711.97 384.20 L725.88 384.20 L739.78 384.20 L753.69 384.20 L767.60 384.20 L781.50 384.20 L795.41 384.20 L809.31 384.20 L823.22 384.20 L837.13 384.20 L851.03 384.20 L864.94 384.20 L878.84 384.20 L892.75 384.20 L906.65 384.20 L920.56 384.20 L934.47 384.20 L948.37 384.20 L962.28 384.20 L976.18 384.20 L990.09 384.20 L1004.00 384.20 L1017.90 384.20 L1031.81 384.20 L1045.71 384.20 L1059.62 384.20 L1073.52 384.20 L1087.43 384.20 L1101.34 384.20 L1115.24 384.20 L1129.15 384.20 L1143.05 384.20 L1156.96 384.20 L1170.87 384.20 L1184.77 384.20 L1198.68 384.20" fill="none" stroke="#705DA0" stroke-width="1.0" stroke-linejoin="round"/><path d="M693.20 384.20 L698.07 384.20 L711.97 384.20 L725.88 384.20 L739.78 384.20 L753.69 384.20 L767.60 384.20 L781.50 384.20 L795.41 384.20 L809.31 384.20 L823.22 384.20 L837.13 384.20 L851.03 384.20 L864.94 384.20 L878.84 384.20 L892.75 384.20 L906.65 384.20 L920.56 384.20 L934.47 384.20 L948.37 384.20 L962.28 384.20 L976.18 384.20 L990.09 384.20 L1004.00 384.20 L1017.90 384.20 L1031.81 384.20 L1045.71 384.20 L1059.62 384.20 L1073.52 384.20 L1087.43 384.20 L1101.34 384.20 L1115.24 384.20 L1129.15 384.20 L1143.05 384.20 L1156.96 384.20 L1170.87 384.20 L1184.77 384.20 L1198.68 384.20" fill="none" stroke="#508642" stroke-width="1.0" stroke-linejoin="round"/><path d="M693.20 384.20 L698.07 384.20 L711.97 384.20 L725.88 384.20 L739.78 384.20 L753.69 384.20 L767.60 384.20 L781.50 384.20 L795.41 384.20 L809.31 384.20 L823.22 384.20 L837.13 384.20 L851.03 384.20 L864.94 384.20 L878.84 384.20 L892.75 384.20 L906.65 384.20 L920.56 384.20 L934.47 384.20 L948.37 384.20 L962.28 384.20 L976.18 384.20 L990.09 384.20 L1004.00 384.20 L1017.90 384.20 L1031.81 384.20 L1045.71 384.20 L1059.62 384.20 L1073.52 384.20 L1087.43 384.20 L1101.34 384.20 L1115.24 384.20 L1129.15 384.20 L1143.05 384.20 L1156.96 384.20 L1170.87 384.20 L1184.77 384.20 L1198.68 384.20" fill="none" stroke="#CCA300" stroke-width="1.0" stroke-linejoin="round"/><path d="M693.20 384.20 L698.07 384.20 L711.97 384.20 L725.88 384.20 L739.78 384.20 L753.69 384.20 L767.60 384.20 L781.50 384.20 L795.41 384.20 L809.31 384.20 L823.22 384.20 L837.13 384.20 L851.03 384.20 L864.94 384.20 L878.84 384.20 L892.75 384.20 L906.65 384.20 L920.56 384.20 L934.47 384.20 L948.37 384.20 L962.28 384.20 L976.18 384.20 L990.09 384.20 L1004.00 384.20 L1017.90 384.20 L1031.81 384.20 L1045.71 384.20 L1059.62 384.20 L1073.52 384.20 L1087.43 384.20 L1101.34 384.20 L1115.24 384.20 L1129.15 384.20 L1143.05 384.20 L1156.96 384.20 L1170.87 384.20 L1184.77 384.20 L1198.68 384.20" fill="none" stroke="#447EBC" stroke-width="1.0" stroke-linejoin="round"/><path d="M693.20 384.20 L698.07 384.20 L711.97 384.20 L725.88 384.20 L739.78 384.20 L753.69 384.20 L767.60 384.20 L781.50 384.20 L795.41 384.20 L809.31 384.20 L823.22 384.20 L837.13 384.20 L851.03 384.20 L864.94 384.20 L878.84 384.20 L892.75 384.20 L906.65 384.20 L920.56 384.20 L934.47 384.20 L948.37 384.20 L962.28 384.20 L976.18 384.20 L990.09 384.20 L1004.00 384.20 L1017.90 384.20 L1031.81 384.20 L1045.71 384.20 L1059.62 384.20 L1073.52 384.20 L1087.43 384.20 L1101.34 384.20 L1115.24 384.20 L1129.15 384.20 L1143.05 384.20 L1156.96 384.20 L1170.87 384.20 L1184.77 384.20 L1198.68 384.20" fill="none" stroke="#7f9484" stroke-width="2" stroke-linejoin="round"/></g><text x="688.50" y="329.90" font-size="11" text-anchor="end" fill="#ccccdc">1</text><text x="688.50" y="358.33" font-size="11" text-anchor="end" textLength="29" lengthAdjust="spacingAndGlyphs" fill="#ccccdc">0.500</text><text x="688.50" y="386.75" font-size="11" text-anchor="end" fill="#ccccdc">0</text><text x="688.50" y="415.18" font-size="11" text-anchor="end" textLength="34.3" lengthAdjust="spacingAndGlyphs" fill="#ccccdc">-0.500</text><text x="688.50" y="443.60" font-size="11" text-anchor="end" textLength="11" lengthAdjust="spacingAndGlyphs" fill="#ccccdc">-1</text><text x="725.88" y="457.20" font-size="11" text-anchor="middle" textLength="26" lengthAdjust="spacingAndGlyphs" fill="#ccccdc">15:15</text><text x="809.31" y="457.20" font-size="11" text-anchor="middle" textLength="26" lengthAdjust="spacingAndGlyphs" fill="#ccccdc">15:16</text><text x="892.75" y="457.20" font-size="11" text-anchor="middle" textLength="26" lengthAdjust="spacingAndGlyphs" fill="#ccccdc">15:17</text><text x="976.18" y="457.20" font-size="11" text-anchor="middle" textLength="26" lengthAdjust="spacingAndGlyphs" fill="#ccccdc">15:18</text><text x="1059.62" y="457.20" font-size="11" text-anchor="middle" textLength="26" lengthAdjust="spacingAndGlyphs" fill="#ccccdc">15:19</text><text x="1143.05" y="457.20" font-size="11" text-anchor="middle" textLength="26" lengthAdjust="spacingAndGlyphs" fill="#ccccdc">15:20</text><text x="0" y="0" font-size="11" fill="#ccccdc" text-anchor="middle" transform="translate(645,390) rotate(-90)" textLength="28.3" lengthAdjust="spacingAndGlyphs">ops/s</text><rect x="644" y="476" width="13" height="4" rx="1.2" fill="#7EB26D"/><text x="669.50" y="480.00" font-size="11" textLength="28.7" lengthAdjust="spacingAndGlyphs" fill="#ccccdc">sdc-r</text><rect x="711.6" y="476" width="13" height="4" rx="1.2" fill="#EAB839"/><text x="736.80" y="480.00" font-size="11" textLength="29.3" lengthAdjust="spacingAndGlyphs" fill="#ccccdc">sdd-r</text><rect x="780" y="476" width="13" height="4" rx="1.2" fill="#6ED0E0"/><text x="804.80" y="480.00" font-size="11" textLength="26.2" lengthAdjust="spacingAndGlyphs" fill="#ccccdc">sdf-r</text><rect x="844.5" y="476" width="13" height="4" rx="1.2" fill="#EF843C"/><text x="870.00" y="480.00" font-size="11" textLength="28.7" lengthAdjust="spacingAndGlyphs" fill="#ccccdc">sdg-r</text><rect x="913.2" y="476" width="13" height="4" rx="1.2" fill="#E24D42"/><text x="938.30" y="480.00" font-size="11" textLength="28.7" lengthAdjust="spacingAndGlyphs" fill="#ccccdc">sdh-r</text><rect x="980.8" y="476" width="13" height="4" rx="1.2" fill="#1F78C1"/><text x="1006.00" y="480.00" font-size="11" textLength="25" lengthAdjust="spacingAndGlyphs" fill="#ccccdc">sdi-r</text><rect x="1044.8" y="476" width="13" height="4" rx="1.2" fill="#BA43A9"/><text x="1070.00" y="480.00" font-size="11" textLength="25" lengthAdjust="spacingAndGlyphs" fill="#ccccdc">sdj-r</text><rect x="1109.2" y="476" width="13" height="4" rx="1.2" fill="#705DA0"/><text x="1134.10" y="480.00" font-size="11" textLength="27.8" lengthAdjust="spacingAndGlyphs" fill="#ccccdc">sdk-r</text><rect x="644" y="495" width="13" height="4" rx="1.2" fill="#508642"/><text x="669.50" y="499.00" font-size="11" textLength="24.7" lengthAdjust="spacingAndGlyphs" fill="#ccccdc">sdl-r</text><rect x="708" y="495" width="13" height="4" rx="1.2" fill="#CCA300"/><text x="733.80" y="499.00" font-size="11" textLength="31.5" lengthAdjust="spacingAndGlyphs" fill="#ccccdc">sdm-r</text><rect x="779.3" y="495" width="13" height="4" rx="1.2" fill="#447EBC"/><text x="804.50" y="499.00" font-size="11" textLength="28.1" lengthAdjust="spacingAndGlyphs" fill="#ccccdc">sdn-r</text><rect x="1244.5" y="281.5" width="607" height="231" rx="2" ry="2" fill="#1a1a1a" stroke="#262c2e" stroke-width="1"/><text x="1548.00" y="300.00" font-size="13" text-anchor="middle" font-weight="500" textLength="103" lengthAdjust="spacingAndGlyphs" fill="#ccccdc" stroke="#ccccdc" stroke-width="0.35">Per Disk BW read</text><path d="M1289.6 327.30H1830M1289.6 365.40H1830M1289.6 403.50H1830M1289.6 441.60H1830M1323.57 327.3V441.6M1410.32 327.3V441.6M1497.06 327.3V441.6M1583.80 327.3V441.6M1670.54 327.3V441.6M1757.28 327.3V441.6" stroke="#9cc8d8" stroke-opacity="0.155" stroke-width="1" fill="none"/><clipPath id="clip6"><rect x="1289.6" y="325.3" width="540.4000000000001" height="116.80000000000001"/></clipPath><g clip-path="url(#clip6)"><path d="M1289.60 434.80 L1294.66 430.30 L1309.12 357.00 L1323.57 362.70 L1338.03 355.50 L1352.49 365.20 L1366.94 362.40 L1381.40 346.40 L1395.86 349.40 L1410.32 375.90 L1424.77 371.80 L1439.23 353.90 L1453.69 368.70 L1468.14 365.70 L1482.60 370.70 L1497.06 368.70 L1511.51 357.30 L1525.97 348.70 L1540.43 358.10 L1554.88 360.40 L1569.34 361.90 L1583.80 368.30 L1598.26 365.70 L1612.71 370.70 L1627.17 367.70 L1641.63 366.80 L1656.08 351.00 L1670.54 363.10 L1685.00 360.80 L1699.45 346.70 L1713.91 361.60 L1728.37 358.10 L1742.82 371.80 L1757.28 359.20 L1771.74 352.50 L1786.20 350.50 L1800.65 358.10 L1815.11 348.20 L1815.11 441.60 L1289.60 441.60 Z" fill="#BA43A9" fill-opacity="0.1" stroke="none"/><path d="M1289.60 434.80 L1294.66 430.30 L1309.12 357.00 L1323.57 362.70 L1338.03 355.50 L1352.49 365.20 L1366.94 362.40 L1381.40 346.40 L1395.86 349.40 L1410.32 375.90 L1424.77 371.80 L1439.23 353.90 L1453.69 368.70 L1468.14 365.70 L1482.60 370.70 L1497.06 368.70 L1511.51 357.30 L1525.97 348.70 L1540.43 358.10 L1554.88 360.40 L1569.34 361.90 L1583.80 368.30 L1598.26 365.70 L1612.71 370.70 L1627.17 367.70 L1641.63 366.80 L1656.08 351.00 L1670.54 363.10 L1685.00 360.80 L1699.45 346.70 L1713.91 361.60 L1728.37 358.10 L1742.82 371.80 L1757.28 359.20 L1771.74 352.50 L1786.20 350.50 L1800.65 358.10 L1815.11 348.20" fill="none" stroke="#BA43A9" stroke-width="1.0" stroke-opacity="0.75" stroke-linejoin="round"/><path d="M1289.60 441.70 L1294.66 441.70 L1309.12 441.70 L1323.57 441.70 L1338.03 441.70 L1352.49 441.70 L1366.94 441.70 L1381.40 441.70 L1395.86 441.70 L1410.32 441.70 L1424.77 441.70 L1439.23 441.70 L1453.69 441.70 L1468.14 441.70 L1482.60 441.70 L1497.06 441.70 L1511.51 441.70 L1525.97 441.70 L1540.43 441.70 L1554.88 441.70 L1569.34 441.70 L1583.80 441.70 L1598.26 441.70 L1612.71 441.70 L1627.17 441.70 L1641.63 441.70 L1656.08 441.70 L1670.54 441.70 L1685.00 441.70 L1699.45 441.70 L1713.91 441.70 L1728.37 441.70 L1742.82 441.70 L1757.28 441.70 L1771.74 441.70 L1786.20 441.70 L1800.65 441.70 L1815.11 441.70 L1815.11 441.60 L1289.60 441.60 Z" fill="#7EB26D" fill-opacity="0.1" stroke="none"/><path d="M1289.60 441.70 L1294.66 441.70 L1309.12 441.70 L1323.57 441.70 L1338.03 441.70 L1352.49 441.70 L1366.94 441.70 L1381.40 441.70 L1395.86 441.70 L1410.32 441.70 L1424.77 441.70 L1439.23 441.70 L1453.69 441.70 L1468.14 441.70 L1482.60 441.70 L1497.06 441.70 L1511.51 441.70 L1525.97 441.70 L1540.43 441.70 L1554.88 441.70 L1569.34 441.70 L1583.80 441.70 L1598.26 441.70 L1612.71 441.70 L1627.17 441.70 L1641.63 441.70 L1656.08 441.70 L1670.54 441.70 L1685.00 441.70 L1699.45 441.70 L1713.91 441.70 L1728.37 441.70 L1742.82 441.70 L1757.28 441.70 L1771.74 441.70 L1786.20 441.70 L1800.65 441.70 L1815.11 441.70" fill="none" stroke="#7EB26D" stroke-width="1.0" stroke-linejoin="round"/><path d="M1289.60 441.70 L1294.66 441.70 L1309.12 441.70 L1323.57 441.70 L1338.03 441.70 L1352.49 441.70 L1366.94 441.70 L1381.40 441.70 L1395.86 441.70 L1410.32 441.70 L1424.77 441.70 L1439.23 441.70 L1453.69 441.70 L1468.14 441.70 L1482.60 441.70 L1497.06 441.70 L1511.51 441.70 L1525.97 441.70 L1540.43 441.70 L1554.88 441.70 L1569.34 441.70 L1583.80 441.70 L1598.26 441.70 L1612.71 441.70 L1627.17 441.70 L1641.63 441.70 L1656.08 441.70 L1670.54 441.70 L1685.00 441.70 L1699.45 441.70 L1713.91 441.70 L1728.37 441.70 L1742.82 441.70 L1757.28 441.70 L1771.74 441.70 L1786.20 441.70 L1800.65 441.70 L1815.11 441.70 L1815.11 441.60 L1289.60 441.60 Z" fill="#EAB839" fill-opacity="0.1" stroke="none"/><path d="M1289.60 441.70 L1294.66 441.70 L1309.12 441.70 L1323.57 441.70 L1338.03 441.70 L1352.49 441.70 L1366.94 441.70 L1381.40 441.70 L1395.86 441.70 L1410.32 441.70 L1424.77 441.70 L1439.23 441.70 L1453.69 441.70 L1468.14 441.70 L1482.60 441.70 L1497.06 441.70 L1511.51 441.70 L1525.97 441.70 L1540.43 441.70 L1554.88 441.70 L1569.34 441.70 L1583.80 441.70 L1598.26 441.70 L1612.71 441.70 L1627.17 441.70 L1641.63 441.70 L1656.08 441.70 L1670.54 441.70 L1685.00 441.70 L1699.45 441.70 L1713.91 441.70 L1728.37 441.70 L1742.82 441.70 L1757.28 441.70 L1771.74 441.70 L1786.20 441.70 L1800.65 441.70 L1815.11 441.70" fill="none" stroke="#EAB839" stroke-width="1.0" stroke-linejoin="round"/><path d="M1289.60 441.70 L1294.66 441.70 L1309.12 441.70 L1323.57 441.70 L1338.03 441.70 L1352.49 441.70 L1366.94 441.70 L1381.40 441.70 L1395.86 441.70 L1410.32 441.70 L1424.77 441.70 L1439.23 441.70 L1453.69 441.70 L1468.14 441.70 L1482.60 441.70 L1497.06 441.70 L1511.51 441.70 L1525.97 441.70 L1540.43 441.70 L1554.88 441.70 L1569.34 441.70 L1583.80 441.70 L1598.26 441.70 L1612.71 441.70 L1627.17 441.70 L1641.63 441.70 L1656.08 441.70 L1670.54 441.70 L1685.00 441.70 L1699.45 441.70 L1713.91 441.70 L1728.37 441.70 L1742.82 441.70 L1757.28 441.70 L1771.74 441.70 L1786.20 441.70 L1800.65 441.70 L1815.11 441.70 L1815.11 441.60 L1289.60 441.60 Z" fill="#6ED0E0" fill-opacity="0.1" stroke="none"/><path d="M1289.60 441.70 L1294.66 441.70 L1309.12 441.70 L1323.57 441.70 L1338.03 441.70 L1352.49 441.70 L1366.94 441.70 L1381.40 441.70 L1395.86 441.70 L1410.32 441.70 L1424.77 441.70 L1439.23 441.70 L1453.69 441.70 L1468.14 441.70 L1482.60 441.70 L1497.06 441.70 L1511.51 441.70 L1525.97 441.70 L1540.43 441.70 L1554.88 441.70 L1569.34 441.70 L1583.80 441.70 L1598.26 441.70 L1612.71 441.70 L1627.17 441.70 L1641.63 441.70 L1656.08 441.70 L1670.54 441.70 L1685.00 441.70 L1699.45 441.70 L1713.91 441.70 L1728.37 441.70 L1742.82 441.70 L1757.28 441.70 L1771.74 441.70 L1786.20 441.70 L1800.65 441.70 L1815.11 441.70" fill="none" stroke="#6ED0E0" stroke-width="1.0" stroke-linejoin="round"/><path d="M1289.60 441.70 L1294.66 441.70 L1309.12 441.70 L1323.57 441.70 L1338.03 441.70 L1352.49 441.70 L1366.94 441.70 L1381.40 441.70 L1395.86 441.70 L1410.32 441.70 L1424.77 441.70 L1439.23 441.70 L1453.69 441.70 L1468.14 441.70 L1482.60 441.70 L1497.06 441.70 L1511.51 441.70 L1525.97 441.70 L1540.43 441.70 L1554.88 441.70 L1569.34 441.70 L1583.80 441.70 L1598.26 441.70 L1612.71 441.70 L1627.17 441.70 L1641.63 441.70 L1656.08 441.70 L1670.54 441.70 L1685.00 441.70 L1699.45 441.70 L1713.91 441.70 L1728.37 441.70 L1742.82 441.70 L1757.28 441.70 L1771.74 441.70 L1786.20 441.70 L1800.65 441.70 L1815.11 441.70 L1815.11 441.60 L1289.60 441.60 Z" fill="#E24D42" fill-opacity="0.1" stroke="none"/><path d="M1289.60 441.70 L1294.66 441.70 L1309.12 441.70 L1323.57 441.70 L1338.03 441.70 L1352.49 441.70 L1366.94 441.70 L1381.40 441.70 L1395.86 441.70 L1410.32 441.70 L1424.77 441.70 L1439.23 441.70 L1453.69 441.70 L1468.14 441.70 L1482.60 441.70 L1497.06 441.70 L1511.51 441.70 L1525.97 441.70 L1540.43 441.70 L1554.88 441.70 L1569.34 441.70 L1583.80 441.70 L1598.26 441.70 L1612.71 441.70 L1627.17 441.70 L1641.63 441.70 L1656.08 441.70 L1670.54 441.70 L1685.00 441.70 L1699.45 441.70 L1713.91 441.70 L1728.37 441.70 L1742.82 441.70 L1757.28 441.70 L1771.74 441.70 L1786.20 441.70 L1800.65 441.70 L1815.11 441.70" fill="none" stroke="#E24D42" stroke-width="1.0" stroke-linejoin="round"/><path d="M1289.60 441.70 L1294.66 441.70 L1309.12 441.70 L1323.57 441.70 L1338.03 441.70 L1352.49 441.70 L1366.94 441.70 L1381.40 441.70 L1395.86 441.70 L1410.32 441.70 L1424.77 441.70 L1439.23 441.70 L1453.69 441.70 L1468.14 441.70 L1482.60 441.70 L1497.06 441.70 L1511.51 441.70 L1525.97 441.70 L1540.43 441.70 L1554.88 441.70 L1569.34 441.70 L1583.80 441.70 L1598.26 441.70 L1612.71 441.70 L1627.17 441.70 L1641.63 441.70 L1656.08 441.70 L1670.54 441.70 L1685.00 441.70 L1699.45 441.70 L1713.91 441.70 L1728.37 441.70 L1742.82 441.70 L1757.28 441.70 L1771.74 441.70 L1786.20 441.70 L1800.65 441.70 L1815.11 441.70 L1815.11 441.60 L1289.60 441.60 Z" fill="#1F78C1" fill-opacity="0.1" stroke="none"/><path d="M1289.60 441.70 L1294.66 441.70 L1309.12 441.70 L1323.57 441.70 L1338.03 441.70 L1352.49 441.70 L1366.94 441.70 L1381.40 441.70 L1395.86 441.70 L1410.32 441.70 L1424.77 441.70 L1439.23 441.70 L1453.69 441.70 L1468.14 441.70 L1482.60 441.70 L1497.06 441.70 L1511.51 441.70 L1525.97 441.70 L1540.43 441.70 L1554.88 441.70 L1569.34 441.70 L1583.80 441.70 L1598.26 441.70 L1612.71 441.70 L1627.17 441.70 L1641.63 441.70 L1656.08 441.70 L1670.54 441.70 L1685.00 441.70 L1699.45 441.70 L1713.91 441.70 L1728.37 441.70 L1742.82 441.70 L1757.28 441.70 L1771.74 441.70 L1786.20 441.70 L1800.65 441.70 L1815.11 441.70" fill="none" stroke="#1F78C1" stroke-width="1.0" stroke-linejoin="round"/><path d="M1289.60 441.70 L1294.66 441.70 L1309.12 441.70 L1323.57 441.70 L1338.03 441.70 L1352.49 441.70 L1366.94 441.70 L1381.40 441.70 L1395.86 441.70 L1410.32 441.70 L1424.77 441.70 L1439.23 441.70 L1453.69 441.70 L1468.14 441.70 L1482.60 441.70 L1497.06 441.70 L1511.51 441.70 L1525.97 441.70 L1540.43 441.70 L1554.88 441.70 L1569.34 441.70 L1583.80 441.70 L1598.26 441.70 L1612.71 441.70 L1627.17 441.70 L1641.63 441.70 L1656.08 441.70 L1670.54 441.70 L1685.00 441.70 L1699.45 441.70 L1713.91 441.70 L1728.37 441.70 L1742.82 441.70 L1757.28 441.70 L1771.74 441.70 L1786.20 441.70 L1800.65 441.70 L1815.11 441.70 L1815.11 441.60 L1289.60 441.60 Z" fill="#705DA0" fill-opacity="0.1" stroke="none"/><path d="M1289.60 441.70 L1294.66 441.70 L1309.12 441.70 L1323.57 441.70 L1338.03 441.70 L1352.49 441.70 L1366.94 441.70 L1381.40 441.70 L1395.86 441.70 L1410.32 441.70 L1424.77 441.70 L1439.23 441.70 L1453.69 441.70 L1468.14 441.70 L1482.60 441.70 L1497.06 441.70 L1511.51 441.70 L1525.97 441.70 L1540.43 441.70 L1554.88 441.70 L1569.34 441.70 L1583.80 441.70 L1598.26 441.70 L1612.71 441.70 L1627.17 441.70 L1641.63 441.70 L1656.08 441.70 L1670.54 441.70 L1685.00 441.70 L1699.45 441.70 L1713.91 441.70 L1728.37 441.70 L1742.82 441.70 L1757.28 441.70 L1771.74 441.70 L1786.20 441.70 L1800.65 441.70 L1815.11 441.70" fill="none" stroke="#705DA0" stroke-width="1.0" stroke-linejoin="round"/><path d="M1289.60 441.70 L1294.66 441.70 L1309.12 441.70 L1323.57 441.70 L1338.03 441.70 L1352.49 441.70 L1366.94 441.70 L1381.40 441.70 L1395.86 441.70 L1410.32 441.70 L1424.77 441.70 L1439.23 441.70 L1453.69 441.70 L1468.14 441.70 L1482.60 441.70 L1497.06 441.70 L1511.51 441.70 L1525.97 441.70 L1540.43 441.70 L1554.88 441.70 L1569.34 441.70 L1583.80 441.70 L1598.26 441.70 L1612.71 441.70 L1627.17 441.70 L1641.63 441.70 L1656.08 441.70 L1670.54 441.70 L1685.00 441.70 L1699.45 441.70 L1713.91 441.70 L1728.37 441.70 L1742.82 441.70 L1757.28 441.70 L1771.74 441.70 L1786.20 441.70 L1800.65 441.70 L1815.11 441.70 L1815.11 441.60 L1289.60 441.60 Z" fill="#508642" fill-opacity="0.1" stroke="none"/><path d="M1289.60 441.70 L1294.66 441.70 L1309.12 441.70 L1323.57 441.70 L1338.03 441.70 L1352.49 441.70 L1366.94 441.70 L1381.40 441.70 L1395.86 441.70 L1410.32 441.70 L1424.77 441.70 L1439.23 441.70 L1453.69 441.70 L1468.14 441.70 L1482.60 441.70 L1497.06 441.70 L1511.51 441.70 L1525.97 441.70 L1540.43 441.70 L1554.88 441.70 L1569.34 441.70 L1583.80 441.70 L1598.26 441.70 L1612.71 441.70 L1627.17 441.70 L1641.63 441.70 L1656.08 441.70 L1670.54 441.70 L1685.00 441.70 L1699.45 441.70 L1713.91 441.70 L1728.37 441.70 L1742.82 441.70 L1757.28 441.70 L1771.74 441.70 L1786.20 441.70 L1800.65 441.70 L1815.11 441.70" fill="none" stroke="#508642" stroke-width="1.0" stroke-linejoin="round"/><path d="M1289.60 441.70 L1294.66 441.70 L1309.12 441.70 L1323.57 441.70 L1338.03 441.70 L1352.49 441.70 L1366.94 441.70 L1381.40 441.70 L1395.86 441.70 L1410.32 441.70 L1424.77 441.70 L1439.23 441.70 L1453.69 441.70 L1468.14 441.70 L1482.60 441.70 L1497.06 441.70 L1511.51 441.70 L1525.97 441.70 L1540.43 441.70 L1554.88 441.70 L1569.34 441.70 L1583.80 441.70 L1598.26 441.70 L1612.71 441.70 L1627.17 441.70 L1641.63 441.70 L1656.08 441.70 L1670.54 441.70 L1685.00 441.70 L1699.45 441.70 L1713.91 441.70 L1728.37 441.70 L1742.82 441.70 L1757.28 441.70 L1771.74 441.70 L1786.20 441.70 L1800.65 441.70 L1815.11 441.70 L1815.11 441.60 L1289.60 441.60 Z" fill="#CCA300" fill-opacity="0.1" stroke="none"/><path d="M1289.60 441.70 L1294.66 441.70 L1309.12 441.70 L1323.57 441.70 L1338.03 441.70 L1352.49 441.70 L1366.94 441.70 L1381.40 441.70 L1395.86 441.70 L1410.32 441.70 L1424.77 441.70 L1439.23 441.70 L1453.69 441.70 L1468.14 441.70 L1482.60 441.70 L1497.06 441.70 L1511.51 441.70 L1525.97 441.70 L1540.43 441.70 L1554.88 441.70 L1569.34 441.70 L1583.80 441.70 L1598.26 441.70 L1612.71 441.70 L1627.17 441.70 L1641.63 441.70 L1656.08 441.70 L1670.54 441.70 L1685.00 441.70 L1699.45 441.70 L1713.91 441.70 L1728.37 441.70 L1742.82 441.70 L1757.28 441.70 L1771.74 441.70 L1786.20 441.70 L1800.65 441.70 L1815.11 441.70" fill="none" stroke="#CCA300" stroke-width="1.0" stroke-linejoin="round"/><path d="M1289.60 441.70 L1294.66 441.70 L1309.12 441.70 L1323.57 441.70 L1338.03 441.70 L1352.49 441.70 L1366.94 441.70 L1381.40 441.70 L1395.86 441.70 L1410.32 441.70 L1424.77 441.70 L1439.23 441.70 L1453.69 441.70 L1468.14 441.70 L1482.60 441.70 L1497.06 441.70 L1511.51 441.70 L1525.97 441.70 L1540.43 441.70 L1554.88 441.70 L1569.34 441.70 L1583.80 441.70 L1598.26 441.70 L1612.71 441.70 L1627.17 441.70 L1641.63 441.70 L1656.08 441.70 L1670.54 441.70 L1685.00 441.70 L1699.45 441.70 L1713.91 441.70 L1728.37 441.70 L1742.82 441.70 L1757.28 441.70 L1771.74 441.70 L1786.20 441.70 L1800.65 441.70 L1815.11 441.70 L1815.11 441.60 L1289.60 441.60 Z" fill="#447EBC" fill-opacity="0.1" stroke="none"/><path d="M1289.60 441.70 L1294.66 441.70 L1309.12 441.70 L1323.57 441.70 L1338.03 441.70 L1352.49 441.70 L1366.94 441.70 L1381.40 441.70 L1395.86 441.70 L1410.32 441.70 L1424.77 441.70 L1439.23 441.70 L1453.69 441.70 L1468.14 441.70 L1482.60 441.70 L1497.06 441.70 L1511.51 441.70 L1525.97 441.70 L1540.43 441.70 L1554.88 441.70 L1569.34 441.70 L1583.80 441.70 L1598.26 441.70 L1612.71 441.70 L1627.17 441.70 L1641.63 441.70 L1656.08 441.70 L1670.54 441.70 L1685.00 441.70 L1699.45 441.70 L1713.91 441.70 L1728.37 441.70 L1742.82 441.70 L1757.28 441.70 L1771.74 441.70 L1786.20 441.70 L1800.65 441.70 L1815.11 441.70" fill="none" stroke="#447EBC" stroke-width="1.0" stroke-linejoin="round"/><path d="M1289.60 441.70 L1294.66 441.70 L1309.12 441.70 L1323.57 441.70 L1338.03 441.70 L1352.49 441.70 L1366.94 441.70 L1381.40 441.70 L1395.86 441.70 L1410.32 441.70 L1424.77 441.70 L1439.23 441.70 L1453.69 441.70 L1468.14 441.70 L1482.60 441.70 L1497.06 440.20 L1511.51 441.70 L1525.97 441.70 L1540.43 441.70 L1554.88 441.70 L1569.34 441.70 L1583.80 441.70 L1598.26 441.70 L1612.71 441.70 L1627.17 441.70 L1641.63 441.70 L1656.08 441.70 L1670.54 441.70 L1685.00 441.70 L1699.45 441.70 L1713.91 441.70 L1728.37 441.70 L1742.82 441.70 L1757.28 441.70 L1771.74 441.70 L1786.20 441.70 L1800.65 441.70 L1815.11 441.70 L1815.11 441.60 L1289.60 441.60 Z" fill="#EF843C" fill-opacity="0.1" stroke="none"/><path d="M1289.60 441.70 L1294.66 441.70 L1309.12 441.70 L1323.57 441.70 L1338.03 441.70 L1352.49 441.70 L1366.94 441.70 L1381.40 441.70 L1395.86 441.70 L1410.32 441.70 L1424.77 441.70 L1439.23 441.70 L1453.69 441.70 L1468.14 441.70 L1482.60 441.70 L1497.06 440.20 L1511.51 441.70 L1525.97 441.70 L1540.43 441.70 L1554.88 441.70 L1569.34 441.70 L1583.80 441.70 L1598.26 441.70 L1612.71 441.70 L1627.17 441.70 L1641.63 441.70 L1656.08 441.70 L1670.54 441.70 L1685.00 441.70 L1699.45 441.70 L1713.91 441.70 L1728.37 441.70 L1742.82 441.70 L1757.28 441.70 L1771.74 441.70 L1786.20 441.70 L1800.65 441.70 L1815.11 441.70" fill="none" stroke="#EF843C" stroke-width="1.0" stroke-linejoin="round"/><path d="M1289.60 441.70 L1294.66 441.70 L1309.12 441.70 L1323.57 441.70 L1338.03 441.70 L1352.49 441.70 L1366.94 441.70 L1381.40 441.70 L1395.86 441.70 L1410.32 441.70 L1424.77 441.70 L1439.23 441.70 L1453.69 441.70 L1468.14 441.70 L1482.60 441.70 L1497.06 441.70 L1511.51 441.70 L1525.97 441.70 L1540.43 441.70 L1554.88 441.70 L1569.34 441.70 L1583.80 441.70 L1598.26 441.70 L1612.71 441.70 L1627.17 441.70 L1641.63 441.70 L1656.08 441.70 L1670.54 441.70 L1685.00 441.70 L1699.45 441.70 L1713.91 441.70 L1728.37 441.70 L1742.82 441.70 L1757.28 441.70 L1771.74 441.70 L1786.20 441.70 L1800.65 441.70 L1815.11 441.70 L1815.11 441.60 L1289.60 441.60 Z" fill="#b87a3c" fill-opacity="0.1" stroke="none"/><path d="M1289.60 441.70 L1294.66 441.70 L1309.12 441.70 L1323.57 441.70 L1338.03 441.70 L1352.49 441.70 L1366.94 441.70 L1381.40 441.70 L1395.86 441.70 L1410.32 441.70 L1424.77 441.70 L1439.23 441.70 L1453.69 441.70 L1468.14 441.70 L1482.60 441.70 L1497.06 441.70 L1511.51 441.70 L1525.97 441.70 L1540.43 441.70 L1554.88 441.70 L1569.34 441.70 L1583.80 441.70 L1598.26 441.70 L1612.71 441.70 L1627.17 441.70 L1641.63 441.70 L1656.08 441.70 L1670.54 441.70 L1685.00 441.70 L1699.45 441.70 L1713.91 441.70 L1728.37 441.70 L1742.82 441.70 L1757.28 441.70 L1771.74 441.70 L1786.20 441.70 L1800.65 441.70 L1815.11 441.70" fill="none" stroke="#b87a3c" stroke-width="1.2" stroke-linejoin="round"/></g><text x="1285.00" y="329.90" font-size="11" text-anchor="end" textLength="31.7" lengthAdjust="spacingAndGlyphs" fill="#ccccdc">3 kB/s</text><text x="1285.00" y="368.00" font-size="11" text-anchor="end" textLength="31.7" lengthAdjust="spacingAndGlyphs" fill="#ccccdc">2 kB/s</text><text x="1285.00" y="406.10" font-size="11" text-anchor="end" textLength="31.7" lengthAdjust="spacingAndGlyphs" fill="#ccccdc">1 kB/s</text><text x="1285.00" y="444.20" font-size="11" text-anchor="end" textLength="31.7" lengthAdjust="spacingAndGlyphs" fill="#ccccdc">0 kB/s</text><text x="1323.57" y="457.80" font-size="11" text-anchor="middle" textLength="26" lengthAdjust="spacingAndGlyphs" fill="#ccccdc">15:15</text><text x="1410.32" y="457.80" font-size="11" text-anchor="middle" textLength="26" lengthAdjust="spacingAndGlyphs" fill="#ccccdc">15:16</text><text x="1497.06" y="457.80" font-size="11" text-anchor="middle" textLength="26" lengthAdjust="spacingAndGlyphs" fill="#ccccdc">15:17</text><text x="1583.80" y="457.80" font-size="11" text-anchor="middle" textLength="26" lengthAdjust="spacingAndGlyphs" fill="#ccccdc">15:18</text><text x="1670.54" y="457.80" font-size="11" text-anchor="middle" textLength="26" lengthAdjust="spacingAndGlyphs" fill="#ccccdc">15:19</text><text x="1757.28" y="457.80" font-size="11" text-anchor="middle" textLength="26" lengthAdjust="spacingAndGlyphs" fill="#ccccdc">15:20</text><rect x="1261" y="476" width="13" height="4" rx="1.2" fill="#7EB26D"/><text x="1286.50" y="480.00" font-size="11" textLength="20" lengthAdjust="spacingAndGlyphs" fill="#ccccdc">sdb</text><rect x="1320" y="476" width="13" height="4" rx="1.2" fill="#EAB839"/><text x="1345.60" y="480.00" font-size="11" textLength="19" lengthAdjust="spacingAndGlyphs" fill="#ccccdc">sdc</text><rect x="1378.5" y="476" width="13" height="4" rx="1.2" fill="#6ED0E0"/><text x="1403.50" y="480.00" font-size="11" textLength="20" lengthAdjust="spacingAndGlyphs" fill="#ccccdc">sdd</text><rect x="1437" y="476" width="13" height="4" rx="1.2" fill="#EF843C"/><text x="1462.60" y="480.00" font-size="11" textLength="19.5" lengthAdjust="spacingAndGlyphs" fill="#ccccdc">sde</text><rect x="1495.8" y="476" width="13" height="4" rx="1.2" fill="#E24D42"/><text x="1521.00" y="480.00" font-size="11" textLength="17" lengthAdjust="spacingAndGlyphs" fill="#ccccdc">sdf</text><rect x="1551.8" y="476" width="13" height="4" rx="1.2" fill="#1F78C1"/><text x="1577.30" y="480.00" font-size="11" textLength="19.8" lengthAdjust="spacingAndGlyphs" fill="#ccccdc">sdg</text><rect x="1611.2" y="476" width="13" height="4" rx="1.2" fill="#BA43A9"/><text x="1636.40" y="480.00" font-size="11" textLength="19.5" lengthAdjust="spacingAndGlyphs" fill="#ccccdc">sdh</text><rect x="1669" y="476" width="13" height="4" rx="1.2" fill="#705DA0"/><text x="1694.30" y="480.00" font-size="11" textLength="15.5" lengthAdjust="spacingAndGlyphs" fill="#ccccdc">sdi</text><rect x="1724.2" y="476" width="13" height="4" rx="1.2" fill="#508642"/><text x="1749.10" y="480.00" font-size="11" textLength="15.2" lengthAdjust="spacingAndGlyphs" fill="#ccccdc">sdj</text><rect x="1779" y="476" width="13" height="4" rx="1.2" fill="#CCA300"/><text x="1804.20" y="480.00" font-size="11" textLength="19.5" lengthAdjust="spacingAndGlyphs" fill="#ccccdc">sdk</text><rect x="1261" y="495" width="13" height="4" rx="1.2" fill="#447EBC"/><text x="1286.50" y="499.00" font-size="11" textLength="15.5" lengthAdjust="spacingAndGlyphs" fill="#ccccdc">sdl</text><rect x="1315.7" y="495" width="13" height="4" rx="1.2" fill="#C15C17"/><text x="1341.60" y="499.00" font-size="11" textLength="19.5" lengthAdjust="spacingAndGlyphs" fill="#ccccdc">sda</text><rect x="12.5" y="520.5" width="607" height="232" rx="2" ry="2" fill="#1a1a1a" stroke="#262c2e" stroke-width="1"/><text x="316.00" y="539.00" font-size="13" text-anchor="middle" font-weight="500" textLength="27" lengthAdjust="spacingAndGlyphs" fill="#ccccdc" stroke="#ccccdc" stroke-width="0.35">CPU</text><path d="M52.7 566.00H597.5M52.7 599.08H597.5M52.7 632.15H597.5M52.7 665.22H597.5M52.7 698.30H597.5M86.95 566V698.3M174.40 566V698.3M261.85 566V698.3M349.29 566V698.3M436.74 566V698.3M524.19 566V698.3" stroke="#9cc8d8" stroke-opacity="0.155" stroke-width="1" fill="none"/><clipPath id="clip7"><rect x="52.7" y="564" width="544.8" height="134.79999999999995"/></clipPath><g clip-path="url(#clip7)"><path d="M52.70 697.30 L57.80 697.30 L72.38 697.30 L86.95 697.30 L101.53 697.30 L116.10 697.30 L130.67 697.30 L145.25 697.30 L159.82 697.30 L174.40 697.30 L188.97 697.30 L203.55 697.30 L218.12 697.30 L232.70 697.30 L247.27 697.30 L261.85 697.30 L276.42 697.30 L291.00 697.30 L305.57 697.30 L320.14 697.30 L334.72 697.30 L349.29 697.30 L363.87 697.30 L378.44 697.30 L393.02 697.30 L407.59 697.30 L422.17 697.30 L436.74 697.30 L451.32 697.30 L465.89 697.30 L480.47 697.30 L495.04 697.30 L509.61 697.30 L524.19 697.30 L538.76 697.30 L553.34 697.30 L567.91 697.30 L582.49 697.30 L582.49 698.30 L52.70 698.30 Z" fill="#7EB26D" fill-opacity="0.1" stroke="none"/><path d="M52.70 697.30 L57.80 697.30 L72.38 697.30 L86.95 697.30 L101.53 697.30 L116.10 697.30 L130.67 697.30 L145.25 697.30 L159.82 697.30 L174.40 697.30 L188.97 697.30 L203.55 697.30 L218.12 697.30 L232.70 697.30 L247.27 697.30 L261.85 697.30 L276.42 697.30 L291.00 697.30 L305.57 697.30 L320.14 697.30 L334.72 697.30 L349.29 697.30 L363.87 697.30 L378.44 697.30 L393.02 697.30 L407.59 697.30 L422.17 697.30 L436.74 697.30 L451.32 697.30 L465.89 697.30 L480.47 697.30 L495.04 697.30 L509.61 697.30 L524.19 697.30 L538.76 697.30 L553.34 697.30 L567.91 697.30 L582.49 697.30" fill="none" stroke="#7EB26D" stroke-width="1.0" stroke-linejoin="round"/><path d="M52.70 697.30 L57.80 697.30 L72.38 697.30 L86.95 697.30 L101.53 697.30 L116.10 697.30 L130.67 697.30 L145.25 697.30 L159.82 697.30 L174.40 697.30 L188.97 697.30 L203.55 697.30 L218.12 697.30 L232.70 697.30 L247.27 697.30 L261.85 697.30 L276.42 697.30 L291.00 697.30 L305.57 697.30 L320.14 697.30 L334.72 697.30 L349.29 697.30 L363.87 697.30 L378.44 697.30 L393.02 697.30 L407.59 697.30 L422.17 697.30 L436.74 697.30 L451.32 697.30 L465.89 697.30 L480.47 697.30 L495.04 697.30 L509.61 697.30 L524.19 697.30 L538.76 697.30 L553.34 697.30 L567.91 697.30 L582.49 697.30 L582.49 698.30 L52.70 698.30 Z" fill="#EAB839" fill-opacity="0.1" stroke="none"/><path d="M52.70 697.30 L57.80 697.30 L72.38 697.30 L86.95 697.30 L101.53 697.30 L116.10 697.30 L130.67 697.30 L145.25 697.30 L159.82 697.30 L174.40 697.30 L188.97 697.30 L203.55 697.30 L218.12 697.30 L232.70 697.30 L247.27 697.30 L261.85 697.30 L276.42 697.30 L291.00 697.30 L305.57 697.30 L320.14 697.30 L334.72 697.30 L349.29 697.30 L363.87 697.30 L378.44 697.30 L393.02 697.30 L407.59 697.30 L422.17 697.30 L436.74 697.30 L451.32 697.30 L465.89 697.30 L480.47 697.30 L495.04 697.30 L509.61 697.30 L524.19 697.30 L538.76 697.30 L553.34 697.30 L567.91 697.30 L582.49 697.30" fill="none" stroke="#EAB839" stroke-width="1.0" stroke-linejoin="round"/><path d="M52.70 697.30 L57.80 697.30 L72.38 697.30 L86.95 697.30 L101.53 697.30 L116.10 697.30 L130.67 697.30 L145.25 697.30 L159.82 697.30 L174.40 697.30 L188.97 697.30 L203.55 697.30 L218.12 697.30 L232.70 697.30 L247.27 697.30 L261.85 697.30 L276.42 697.30 L291.00 697.30 L305.57 697.30 L320.14 697.30 L334.72 697.30 L349.29 697.30 L363.87 697.30 L378.44 697.30 L393.02 697.30 L407.59 697.30 L422.17 697.30 L436.74 697.30 L451.32 697.30 L465.89 697.30 L480.47 697.30 L495.04 697.30 L509.61 697.30 L524.19 697.30 L538.76 697.30 L553.34 697.30 L567.91 697.30 L582.49 697.30 L582.49 698.30 L52.70 698.30 Z" fill="#6ED0E0" fill-opacity="0.1" stroke="none"/><path d="M52.70 697.30 L57.80 697.30 L72.38 697.30 L86.95 697.30 L101.53 697.30 L116.10 697.30 L130.67 697.30 L145.25 697.30 L159.82 697.30 L174.40 697.30 L188.97 697.30 L203.55 697.30 L218.12 697.30 L232.70 697.30 L247.27 697.30 L261.85 697.30 L276.42 697.30 L291.00 697.30 L305.57 697.30 L320.14 697.30 L334.72 697.30 L349.29 697.30 L363.87 697.30 L378.44 697.30 L393.02 697.30 L407.59 697.30 L422.17 697.30 L436.74 697.30 L451.32 697.30 L465.89 697.30 L480.47 697.30 L495.04 697.30 L509.61 697.30 L524.19 697.30 L538.76 697.30 L553.34 697.30 L567.91 697.30 L582.49 697.30" fill="none" stroke="#6ED0E0" stroke-width="1.0" stroke-linejoin="round"/><path d="M52.70 697.30 L57.80 697.30 L72.38 697.30 L86.95 697.30 L101.53 697.30 L116.10 697.30 L130.67 697.30 L145.25 697.30 L159.82 697.30 L174.40 697.30 L188.97 697.30 L203.55 697.30 L218.12 697.30 L232.70 697.30 L247.27 697.30 L261.85 697.30 L276.42 697.30 L291.00 697.30 L305.57 697.30 L320.14 697.30 L334.72 697.30 L349.29 697.30 L363.87 697.30 L378.44 697.30 L393.02 697.30 L407.59 697.30 L422.17 697.30 L436.74 697.30 L451.32 697.30 L465.89 697.30 L480.47 697.30 L495.04 697.30 L509.61 697.30 L524.19 697.30 L538.76 697.30 L553.34 697.30 L567.91 697.30 L582.49 697.30 L582.49 698.30 L52.70 698.30 Z" fill="#EF843C" fill-opacity="0.1" stroke="none"/><path d="M52.70 697.30 L57.80 697.30 L72.38 697.30 L86.95 697.30 L101.53 697.30 L116.10 697.30 L130.67 697.30 L145.25 697.30 L159.82 697.30 L174.40 697.30 L188.97 697.30 L203.55 697.30 L218.12 697.30 L232.70 697.30 L247.27 697.30 L261.85 697.30 L276.42 697.30 L291.00 697.30 L305.57 697.30 L320.14 697.30 L334.72 697.30 L349.29 697.30 L363.87 697.30 L378.44 697.30 L393.02 697.30 L407.59 697.30 L422.17 697.30 L436.74 697.30 L451.32 697.30 L465.89 697.30 L480.47 697.30 L495.04 697.30 L509.61 697.30 L524.19 697.30 L538.76 697.30 L553.34 697.30 L567.91 697.30 L582.49 697.30" fill="none" stroke="#EF843C" stroke-width="1.0" stroke-linejoin="round"/><path d="M52.70 697.30 L57.80 697.30 L72.38 697.30 L86.95 697.30 L101.53 697.30 L116.10 697.30 L130.67 697.30 L145.25 697.30 L159.82 697.30 L174.40 697.30 L188.97 697.30 L203.55 697.30 L218.12 697.30 L232.70 697.30 L247.27 697.30 L261.85 697.30 L276.42 697.30 L291.00 697.30 L305.57 697.30 L320.14 697.30 L334.72 697.30 L349.29 697.30 L363.87 697.30 L378.44 697.30 L393.02 697.30 L407.59 697.30 L422.17 697.30 L436.74 697.30 L451.32 697.30 L465.89 697.30 L480.47 697.30 L495.04 697.30 L509.61 697.30 L524.19 697.30 L538.76 697.30 L553.34 697.30 L567.91 697.30 L582.49 697.30" fill="none" stroke="#d7a564" stroke-width="1.5" stroke-linejoin="round"/></g><text x="47.80" y="568.60" font-size="11" text-anchor="end" textLength="26.3" lengthAdjust="spacingAndGlyphs" fill="#ccccdc">100%</text><text x="47.80" y="601.68" font-size="11" text-anchor="end" textLength="20" lengthAdjust="spacingAndGlyphs" fill="#ccccdc">75%</text><text x="47.80" y="634.75" font-size="11" text-anchor="end" textLength="20" lengthAdjust="spacingAndGlyphs" fill="#ccccdc">50%</text><text x="47.80" y="667.82" font-size="11" text-anchor="end" textLength="20" lengthAdjust="spacingAndGlyphs" fill="#ccccdc">25%</text><text x="47.80" y="700.90" font-size="11" text-anchor="end" textLength="14.3" lengthAdjust="spacingAndGlyphs" fill="#ccccdc">0%</text><text x="86.95" y="714.50" font-size="11" text-anchor="middle" textLength="26" lengthAdjust="spacingAndGlyphs" fill="#ccccdc">15:15</text><text x="174.40" y="714.50" font-size="11" text-anchor="middle" textLength="26" lengthAdjust="spacingAndGlyphs" fill="#ccccdc">15:16</text><text x="261.85" y="714.50" font-size="11" text-anchor="middle" textLength="26" lengthAdjust="spacingAndGlyphs" fill="#ccccdc">15:17</text><text x="349.29" y="714.50" font-size="11" text-anchor="middle" textLength="26" lengthAdjust="spacingAndGlyphs" fill="#ccccdc">15:18</text><text x="436.74" y="714.50" font-size="11" text-anchor="middle" textLength="26" lengthAdjust="spacingAndGlyphs" fill="#ccccdc">15:19</text><text x="524.19" y="714.50" font-size="11" text-anchor="middle" textLength="26" lengthAdjust="spacingAndGlyphs" fill="#ccccdc">15:20</text><rect x="29.2" y="734" width="13" height="4" rx="1.2" fill="#7EB26D"/><text x="54.30" y="738.00" font-size="11" textLength="25.1" lengthAdjust="spacingAndGlyphs" fill="#ccccdc">User</text><rect x="92.8" y="734" width="13" height="4" rx="1.2" fill="#EAB839"/><text x="118.40" y="738.00" font-size="11" textLength="39.2" lengthAdjust="spacingAndGlyphs" fill="#ccccdc">System</text><rect x="171" y="734" width="13" height="4" rx="1.2" fill="#6ED0E0"/><text x="196.70" y="738.00" font-size="11" textLength="31.7" lengthAdjust="spacingAndGlyphs" fill="#ccccdc">Iowait</text><rect x="242" y="734" width="13" height="4" rx="1.2" fill="#EF843C"/><text x="267.70" y="738.00" font-size="11" textLength="39.5" lengthAdjust="spacingAndGlyphs" fill="#ccccdc">soft_irq</text><rect x="627.5" y="520.5" width="608" height="232" rx="2" ry="2" fill="#1a1a1a" stroke="#262c2e" stroke-width="1"/><text x="931.50" y="539.00" font-size="13" text-anchor="middle" font-weight="500" textLength="113" lengthAdjust="spacingAndGlyphs" fill="#ccccdc" stroke="#ccccdc" stroke-width="0.35">Memory Utilization</text><path d="M677.1 566.00H1213M677.1 610.10H1213M677.1 654.20H1213M677.1 698.30H1213M710.79 566V698.3M796.81 566V698.3M882.83 566V698.3M968.85 566V698.3M1054.87 566V698.3M1140.89 566V698.3" stroke="#9cc8d8" stroke-opacity="0.155" stroke-width="1" fill="none"/><clipPath id="clip8"><rect x="677.1" y="564" width="535.9" height="134.79999999999995"/></clipPath><g clip-path="url(#clip8)"><path d="M677.10 669.30 L682.12 669.30 L696.45 669.30 L710.79 669.30 L725.13 669.30 L739.46 669.30 L753.80 669.30 L768.14 669.30 L782.47 669.30 L796.81 669.30 L811.15 669.30 L825.48 669.30 L839.82 669.30 L854.16 669.30 L868.49 669.30 L882.83 669.30 L897.17 669.30 L911.50 669.30 L925.84 669.30 L940.18 669.30 L954.51 669.30 L968.85 669.30 L983.19 669.30 L997.52 669.30 L1011.86 669.30 L1026.19 669.30 L1040.53 669.30 L1054.87 669.30 L1069.20 669.30 L1083.54 669.30 L1097.88 669.30 L1112.21 669.30 L1126.55 669.30 L1140.89 669.30 L1155.22 669.30 L1169.56 669.30 L1183.90 669.30 L1198.23 669.30 L1198.23 698.30 L677.10 698.30 Z" fill="#7EB26D" fill-opacity="0.09" stroke="none"/><path d="M677.10 669.30 L682.12 669.30 L696.45 669.30 L710.79 669.30 L725.13 669.30 L739.46 669.30 L753.80 669.30 L768.14 669.30 L782.47 669.30 L796.81 669.30 L811.15 669.30 L825.48 669.30 L839.82 669.30 L854.16 669.30 L868.49 669.30 L882.83 669.30 L897.17 669.30 L911.50 669.30 L925.84 669.30 L940.18 669.30 L954.51 669.30 L968.85 669.30 L983.19 669.30 L997.52 669.30 L1011.86 669.30 L1026.19 669.30 L1040.53 669.30 L1054.87 669.30 L1069.20 669.30 L1083.54 669.30 L1097.88 669.30 L1112.21 669.30 L1126.55 669.30 L1140.89 669.30 L1155.22 669.30 L1169.56 669.30 L1183.90 669.30 L1198.23 669.30" fill="none" stroke="#7EB26D" stroke-width="1.0" stroke-linejoin="round"/><path d="M677.10 659.60 L682.12 659.60 L696.45 659.60 L710.79 659.60 L725.13 659.60 L739.46 659.60 L753.80 659.60 L768.14 659.60 L782.47 659.60 L796.81 659.60 L811.15 659.60 L825.48 659.60 L839.82 659.60 L854.16 659.60 L868.49 659.60 L882.83 659.60 L897.17 659.60 L911.50 659.60 L925.84 659.60 L940.18 659.60 L954.51 659.60 L968.85 659.60 L983.19 659.60 L997.52 659.60 L1011.86 659.60 L1026.19 659.60 L1040.53 659.60 L1054.87 659.60 L1069.20 659.60 L1083.54 659.60 L1097.88 659.60 L1112.21 659.60 L1126.55 659.60 L1140.89 659.60 L1155.22 659.60 L1169.56 659.60 L1183.90 659.60 L1198.23 659.60 L1198.23 669.30 L677.10 669.30 Z" fill="#EAB839" fill-opacity="0.08" stroke="none"/><path d="M677.10 659.60 L682.12 659.60 L696.45 659.60 L710.79 659.60 L725.13 659.60 L739.46 659.60 L753.80 659.60 L768.14 659.60 L782.47 659.60 L796.81 659.60 L811.15 659.60 L825.48 659.60 L839.82 659.60 L854.16 659.60 L868.49 659.60 L882.83 659.60 L897.17 659.60 L911.50 659.60 L925.84 659.60 L940.18 659.60 L954.51 659.60 L968.85 659.60 L983.19 659.60 L997.52 659.60 L1011.86 659.60 L1026.19 659.60 L1040.53 659.60 L1054.87 659.60 L1069.20 659.60 L1083.54 659.60 L1097.88 659.60 L1112.21 659.60 L1126.55 659.60 L1140.89 659.60 L1155.22 659.60 L1169.56 659.60 L1183.90 659.60 L1198.23 659.60" fill="none" stroke="#EAB839" stroke-width="1.0" stroke-linejoin="round"/><path d="M677.10 658.70 L682.12 658.70 L696.45 658.70 L710.79 658.70 L725.13 658.70 L739.46 658.70 L753.80 658.70 L768.14 658.70 L782.47 658.70 L796.81 658.70 L811.15 658.70 L825.48 658.70 L839.82 658.70 L854.16 658.70 L868.49 658.70 L882.83 658.70 L897.17 658.70 L911.50 658.70 L925.84 658.70 L940.18 658.70 L954.51 658.70 L968.85 658.70 L983.19 658.70 L997.52 658.70 L1011.86 658.70 L1026.19 658.70 L1040.53 658.70 L1054.87 658.70 L1069.20 658.70 L1083.54 658.70 L1097.88 658.70 L1112.21 658.70 L1126.55 658.70 L1140.89 658.70 L1155.22 658.70 L1169.56 658.70 L1183.90 658.70 L1198.23 658.70" fill="none" stroke="#a8d8b0" stroke-width="1.0" stroke-linejoin="round"/><path d="M677.10 585.50 L682.12 585.50 L696.45 585.50 L710.79 585.50 L725.13 585.50 L739.46 585.50 L753.80 585.50 L768.14 585.50 L782.47 585.50 L796.81 585.50 L811.15 585.50 L825.48 585.50 L839.82 585.50 L854.16 585.50 L868.49 585.50 L882.83 585.50 L897.17 585.50 L911.50 585.50 L925.84 585.50 L940.18 585.50 L954.51 585.50 L968.85 585.50 L983.19 585.50 L997.52 585.50 L1011.86 585.50 L1026.19 585.50 L1040.53 585.50 L1054.87 585.50 L1069.20 585.50 L1083.54 585.50 L1097.88 585.50 L1112.21 585.50 L1126.55 585.50 L1140.89 585.50 L1155.22 585.50 L1169.56 585.50 L1183.90 585.50 L1198.23 585.50 L1198.23 659.00 L677.10 659.00 Z" fill="#EF843C" fill-opacity="0.08" stroke="none"/><path d="M677.10 585.50 L682.12 585.50 L696.45 585.50 L710.79 585.50 L725.13 585.50 L739.46 585.50 L753.80 585.50 L768.14 585.50 L782.47 585.50 L796.81 585.50 L811.15 585.50 L825.48 585.50 L839.82 585.50 L854.16 585.50 L868.49 585.50 L882.83 585.50 L897.17 585.50 L911.50 585.50 L925.84 585.50 L940.18 585.50 L954.51 585.50 L968.85 585.50 L983.19 585.50 L997.52 585.50 L1011.86 585.50 L1026.19 585.50 L1040.53 585.50 L1054.87 585.50 L1069.20 585.50 L1083.54 585.50 L1097.88 585.50 L1112.21 585.50 L1126.55 585.50 L1140.89 585.50 L1155.22 585.50 L1169.56 585.50 L1183.90 585.50 L1198.23 585.50" fill="none" stroke="#EF843C" stroke-width="1.0" stroke-linejoin="round"/><path d="M677.10 584.80 L682.12 584.80 L696.45 584.80 L710.79 584.80 L725.13 584.80 L739.46 584.80 L753.80 584.80 L768.14 584.80 L782.47 584.80 L796.81 584.80 L811.15 584.80 L825.48 584.80 L839.82 584.80 L854.16 584.80 L868.49 584.80 L882.83 584.80 L897.17 584.80 L911.50 584.80 L925.84 584.80 L940.18 584.80 L954.51 584.80 L968.85 584.80 L983.19 584.80 L997.52 584.80 L1011.86 584.80 L1026.19 584.80 L1040.53 584.80 L1054.87 584.80 L1069.20 584.80 L1083.54 584.80 L1097.88 584.80 L1112.21 584.80 L1126.55 584.80 L1140.89 584.80 L1155.22 584.80 L1169.56 584.80 L1183.90 584.80 L1198.23 584.80" fill="none" stroke="#E24D42" stroke-width="1.0" stroke-linejoin="round"/></g><text x="672.50" y="568.60" font-size="11" text-anchor="end" textLength="35.9" lengthAdjust="spacingAndGlyphs" fill="#ccccdc">150 GB</text><text x="672.50" y="612.70" font-size="11" text-anchor="end" textLength="35.9" lengthAdjust="spacingAndGlyphs" fill="#ccccdc">100 GB</text><text x="672.50" y="656.80" font-size="11" text-anchor="end" textLength="30.5" lengthAdjust="spacingAndGlyphs" fill="#ccccdc">50 GB</text><text x="672.50" y="700.90" font-size="11" text-anchor="end" textLength="25.9" lengthAdjust="spacingAndGlyphs" fill="#ccccdc">0 MB</text><text x="710.79" y="714.50" font-size="11" text-anchor="middle" textLength="26" lengthAdjust="spacingAndGlyphs" fill="#ccccdc">15:15</text><text x="796.81" y="714.50" font-size="11" text-anchor="middle" textLength="26" lengthAdjust="spacingAndGlyphs" fill="#ccccdc">15:16</text><text x="882.83" y="714.50" font-size="11" text-anchor="middle" textLength="26" lengthAdjust="spacingAndGlyphs" fill="#ccccdc">15:17</text><text x="968.85" y="714.50" font-size="11" text-anchor="middle" textLength="26" lengthAdjust="spacingAndGlyphs" fill="#ccccdc">15:18</text><text x="1054.87" y="714.50" font-size="11" text-anchor="middle" textLength="26" lengthAdjust="spacingAndGlyphs" fill="#ccccdc">15:19</text><text x="1140.89" y="714.50" font-size="11" text-anchor="middle" textLength="26" lengthAdjust="spacingAndGlyphs" fill="#ccccdc">15:20</text><rect x="644" y="734" width="13" height="4" rx="1.2" fill="#7EB26D"/><text x="669.30" y="738.00" font-size="11" textLength="27.6" lengthAdjust="spacingAndGlyphs" fill="#ccccdc">Used</text><rect x="710.9" y="734" width="13" height="4" rx="1.2" fill="#EAB839"/><text x="735.90" y="738.00" font-size="11" textLength="40.7" lengthAdjust="spacingAndGlyphs" fill="#ccccdc">Cached</text><rect x="789.8" y="734" width="13" height="4" rx="1.2" fill="#6ED0E0"/><text x="815.40" y="738.00" font-size="11" textLength="37.9" lengthAdjust="spacingAndGlyphs" fill="#ccccdc">Buffers</text><rect x="868" y="734" width="13" height="4" rx="1.2" fill="#EF843C"/><text x="893.00" y="738.00" font-size="11" textLength="23.5" lengthAdjust="spacingAndGlyphs" fill="#ccccdc">Free</text><rect x="930" y="734" width="13" height="4" rx="1.2" fill="#E24D42"/><text x="955.70" y="738.00" font-size="11" textLength="31.7" lengthAdjust="spacingAndGlyphs" fill="#ccccdc">SWAP</text><rect x="1244.5" y="520.5" width="607" height="232" rx="2" ry="2" fill="#1a1a1a" stroke="#262c2e" stroke-width="1"/><text x="1548.00" y="539.00" font-size="13" text-anchor="middle" font-weight="500" textLength="106" lengthAdjust="spacingAndGlyphs" fill="#ccccdc" stroke="#ccccdc" stroke-width="0.35">Per Disk BW write</text><path d="M1302.9 566.00H1829.5M1302.9 594.50H1829.5M1302.9 623.00H1829.5M1302.9 651.50H1829.5M1302.9 680.00H1829.5M1336.01 566V680M1420.53 566V680M1505.06 566V680M1589.59 566V680M1674.11 566V680M1758.64 566V680" stroke="#9cc8d8" stroke-opacity="0.155" stroke-width="1" fill="none"/><clipPath id="clip9"><rect x="1302.9" y="564" width="526.5999999999999" height="116.5"/></clipPath><g clip-path="url(#clip9)"><path d="M1302.90 669.30 L1307.83 669.50 L1321.92 669.30 L1336.01 669.00 L1350.09 669.00 L1364.18 671.10 L1378.27 669.80 L1392.36 669.00 L1406.44 670.60 L1420.53 670.90 L1434.62 669.50 L1448.71 670.90 L1462.80 670.30 L1476.88 670.30 L1490.97 671.40 L1505.06 670.30 L1519.15 669.80 L1533.23 671.40 L1547.32 670.90 L1561.41 669.50 L1575.50 669.50 L1589.59 669.80 L1603.67 669.00 L1617.76 669.80 L1631.85 669.50 L1645.94 669.50 L1660.02 669.50 L1674.11 664.80 L1688.20 669.30 L1702.29 669.30 L1716.38 669.00 L1730.46 668.60 L1744.55 670.30 L1758.64 670.30 L1772.73 668.60 L1786.81 670.30 L1800.90 669.00 L1814.99 667.60 L1814.99 680.00 L1302.90 680.00 Z" fill="#7EB26D" fill-opacity="0.1" stroke="none"/><path d="M1302.90 669.30 L1307.83 669.50 L1321.92 669.30 L1336.01 669.00 L1350.09 669.00 L1364.18 671.10 L1378.27 669.80 L1392.36 669.00 L1406.44 670.60 L1420.53 670.90 L1434.62 669.50 L1448.71 670.90 L1462.80 670.30 L1476.88 670.30 L1490.97 671.40 L1505.06 670.30 L1519.15 669.80 L1533.23 671.40 L1547.32 670.90 L1561.41 669.50 L1575.50 669.50 L1589.59 669.80 L1603.67 669.00 L1617.76 669.80 L1631.85 669.50 L1645.94 669.50 L1660.02 669.50 L1674.11 664.80 L1688.20 669.30 L1702.29 669.30 L1716.38 669.00 L1730.46 668.60 L1744.55 670.30 L1758.64 670.30 L1772.73 668.60 L1786.81 670.30 L1800.90 669.00 L1814.99 667.60" fill="none" stroke="#7EB26D" stroke-width="1.0" stroke-linejoin="round"/><path d="M1302.90 679.50 L1307.83 679.50 L1321.92 679.50 L1336.01 679.50 L1350.09 679.50 L1364.18 679.50 L1378.27 679.50 L1392.36 679.50 L1406.44 679.50 L1420.53 679.50 L1434.62 679.50 L1448.71 679.50 L1462.80 679.50 L1476.88 679.50 L1490.97 679.50 L1505.06 679.50 L1519.15 679.50 L1533.23 679.50 L1547.32 679.50 L1561.41 679.50 L1575.50 679.50 L1589.59 679.50 L1603.67 679.50 L1617.76 679.50 L1631.85 679.50 L1645.94 679.50 L1660.02 679.50 L1674.11 679.50 L1688.20 679.50 L1702.29 679.50 L1716.38 679.50 L1730.46 679.50 L1744.55 679.50 L1758.64 679.50 L1772.73 679.50 L1786.81 679.50 L1800.90 679.50 L1814.99 679.50 L1814.99 680.00 L1302.90 680.00 Z" fill="#EAB839" fill-opacity="0.1" stroke="none"/><path d="M1302.90 679.50 L1307.83 679.50 L1321.92 679.50 L1336.01 679.50 L1350.09 679.50 L1364.18 679.50 L1378.27 679.50 L1392.36 679.50 L1406.44 679.50 L1420.53 679.50 L1434.62 679.50 L1448.71 679.50 L1462.80 679.50 L1476.88 679.50 L1490.97 679.50 L1505.06 679.50 L1519.15 679.50 L1533.23 679.50 L1547.32 679.50 L1561.41 679.50 L1575.50 679.50 L1589.59 679.50 L1603.67 679.50 L1617.76 679.50 L1631.85 679.50 L1645.94 679.50 L1660.02 679.50 L1674.11 679.50 L1688.20 679.50 L1702.29 679.50 L1716.38 679.50 L1730.46 679.50 L1744.55 679.50 L1758.64 679.50 L1772.73 679.50 L1786.81 679.50 L1800.90 679.50 L1814.99 679.50" fill="none" stroke="#EAB839" stroke-width="1.0" stroke-linejoin="round"/><path d="M1302.90 679.50 L1307.83 679.50 L1321.92 679.50 L1336.01 679.50 L1350.09 679.50 L1364.18 679.50 L1378.27 679.50 L1392.36 679.50 L1406.44 679.50 L1420.53 679.50 L1434.62 679.50 L1448.71 679.50 L1462.80 679.50 L1476.88 679.50 L1490.97 679.50 L1505.06 679.50 L1519.15 679.50 L1533.23 679.50 L1547.32 679.50 L1561.41 679.50 L1575.50 679.50 L1589.59 679.50 L1603.67 679.50 L1617.76 679.50 L1631.85 679.50 L1645.94 679.50 L1660.02 679.50 L1674.11 679.50 L1688.20 679.50 L1702.29 679.50 L1716.38 679.50 L1730.46 679.50 L1744.55 679.50 L1758.64 679.50 L1772.73 679.50 L1786.81 679.50 L1800.90 679.50 L1814.99 679.50 L1814.99 680.00 L1302.90 680.00 Z" fill="#6ED0E0" fill-opacity="0.1" stroke="none"/><path d="M1302.90 679.50 L1307.83 679.50 L1321.92 679.50 L1336.01 679.50 L1350.09 679.50 L1364.18 679.50 L1378.27 679.50 L1392.36 679.50 L1406.44 679.50 L1420.53 679.50 L1434.62 679.50 L1448.71 679.50 L1462.80 679.50 L1476.88 679.50 L1490.97 679.50 L1505.06 679.50 L1519.15 679.50 L1533.23 679.50 L1547.32 679.50 L1561.41 679.50 L1575.50 679.50 L1589.59 679.50 L1603.67 679.50 L1617.76 679.50 L1631.85 679.50 L1645.94 679.50 L1660.02 679.50 L1674.11 679.50 L1688.20 679.50 L1702.29 679.50 L1716.38 679.50 L1730.46 679.50 L1744.55 679.50 L1758.64 679.50 L1772.73 679.50 L1786.81 679.50 L1800.90 679.50 L1814.99 679.50" fill="none" stroke="#6ED0E0" stroke-width="1.0" stroke-linejoin="round"/><path d="M1302.90 670.30 L1307.83 670.30 L1321.92 670.30 L1336.01 669.30 L1350.09 665.30 L1364.18 669.80 L1378.27 670.90 L1392.36 669.80 L1406.44 670.30 L1420.53 670.90 L1434.62 670.30 L1448.71 671.40 L1462.80 670.90 L1476.88 671.40 L1490.97 669.00 L1505.06 667.00 L1519.15 669.80 L1533.23 670.90 L1547.32 669.80 L1561.41 667.60 L1575.50 667.30 L1589.59 669.00 L1603.67 671.40 L1617.76 669.80 L1631.85 671.40 L1645.94 670.30 L1660.02 670.30 L1674.11 670.30 L1688.20 670.30 L1702.29 661.00 L1716.38 664.00 L1730.46 663.70 L1744.55 665.70 L1758.64 662.70 L1772.73 669.80 L1786.81 664.80 L1800.90 670.30 L1814.99 671.40 L1814.99 680.00 L1302.90 680.00 Z" fill="#EF843C" fill-opacity="0.1" stroke="none"/><path d="M1302.90 670.30 L1307.83 670.30 L1321.92 670.30 L1336.01 669.30 L1350.09 665.30 L1364.18 669.80 L1378.27 670.90 L1392.36 669.80 L1406.44 670.30 L1420.53 670.90 L1434.62 670.30 L1448.71 671.40 L1462.80 670.90 L1476.88 671.40 L1490.97 669.00 L1505.06 667.00 L1519.15 669.80 L1533.23 670.90 L1547.32 669.80 L1561.41 667.60 L1575.50 667.30 L1589.59 669.00 L1603.67 671.40 L1617.76 669.80 L1631.85 671.40 L1645.94 670.30 L1660.02 670.30 L1674.11 670.30 L1688.20 670.30 L1702.29 661.00 L1716.38 664.00 L1730.46 663.70 L1744.55 665.70 L1758.64 662.70 L1772.73 669.80 L1786.81 664.80 L1800.90 670.30 L1814.99 671.40" fill="none" stroke="#EF843C" stroke-width="1.0" stroke-linejoin="round"/><path d="M1302.90 679.50 L1307.83 679.50 L1321.92 679.50 L1336.01 679.50 L1350.09 679.50 L1364.18 679.50 L1378.27 679.50 L1392.36 679.50 L1406.44 679.50 L1420.53 679.50 L1434.62 679.50 L1448.71 679.50 L1462.80 679.50 L1476.88 679.50 L1490.97 679.50 L1505.06 679.50 L1519.15 679.50 L1533.23 679.50 L1547.32 679.50 L1561.41 679.50 L1575.50 679.50 L1589.59 679.50 L1603.67 679.50 L1617.76 679.50 L1631.85 679.50 L1645.94 679.50 L1660.02 679.50 L1674.11 679.50 L1688.20 679.50 L1702.29 679.50 L1716.38 679.50 L1730.46 679.50 L1744.55 679.50 L1758.64 679.50 L1772.73 679.50 L1786.81 679.50 L1800.90 679.50 L1814.99 679.50 L1814.99 680.00 L1302.90 680.00 Z" fill="#E24D42" fill-opacity="0.1" stroke="none"/><path d="M1302.90 679.50 L1307.83 679.50 L1321.92 679.50 L1336.01 679.50 L1350.09 679.50 L1364.18 679.50 L1378.27 679.50 L1392.36 679.50 L1406.44 679.50 L1420.53 679.50 L1434.62 679.50 L1448.71 679.50 L1462.80 679.50 L1476.88 679.50 L1490.97 679.50 L1505.06 679.50 L1519.15 679.50 L1533.23 679.50 L1547.32 679.50 L1561.41 679.50 L1575.50 679.50 L1589.59 679.50 L1603.67 679.50 L1617.76 679.50 L1631.85 679.50 L1645.94 679.50 L1660.02 679.50 L1674.11 679.50 L1688.20 679.50 L1702.29 679.50 L1716.38 679.50 L1730.46 679.50 L1744.55 679.50 L1758.64 679.50 L1772.73 679.50 L1786.81 679.50 L1800.90 679.50 L1814.99 679.50" fill="none" stroke="#E24D42" stroke-width="1.0" stroke-linejoin="round"/><path d="M1302.90 679.50 L1307.83 679.50 L1321.92 679.50 L1336.01 679.50 L1350.09 679.50 L1364.18 679.50 L1378.27 679.50 L1392.36 679.50 L1406.44 679.50 L1420.53 679.50 L1434.62 679.50 L1448.71 679.50 L1462.80 679.50 L1476.88 679.50 L1490.97 679.50 L1505.06 679.50 L1519.15 679.50 L1533.23 679.50 L1547.32 679.50 L1561.41 679.50 L1575.50 679.50 L1589.59 679.50 L1603.67 679.50 L1617.76 679.50 L1631.85 679.50 L1645.94 679.50 L1660.02 679.50 L1674.11 679.50 L1688.20 679.50 L1702.29 679.50 L1716.38 679.50 L1730.46 679.50 L1744.55 679.50 L1758.64 679.50 L1772.73 679.50 L1786.81 679.50 L1800.90 679.50 L1814.99 679.50 L1814.99 680.00 L1302.90 680.00 Z" fill="#1F78C1" fill-opacity="0.1" stroke="none"/><path d="M1302.90 679.50 L1307.83 679.50 L1321.92 679.50 L1336.01 679.50 L1350.09 679.50 L1364.18 679.50 L1378.27 679.50 L1392.36 679.50 L1406.44 679.50 L1420.53 679.50 L1434.62 679.50 L1448.71 679.50 L1462.80 679.50 L1476.88 679.50 L1490.97 679.50 L1505.06 679.50 L1519.15 679.50 L1533.23 679.50 L1547.32 679.50 L1561.41 679.50 L1575.50 679.50 L1589.59 679.50 L1603.67 679.50 L1617.76 679.50 L1631.85 679.50 L1645.94 679.50 L1660.02 679.50 L1674.11 679.50 L1688.20 679.50 L1702.29 679.50 L1716.38 679.50 L1730.46 679.50 L1744.55 679.50 L1758.64 679.50 L1772.73 679.50 L1786.81 679.50 L1800.90 679.50 L1814.99 679.50" fill="none" stroke="#1F78C1" stroke-width="1.0" stroke-linejoin="round"/><path d="M1302.90 679.50 L1307.83 679.50 L1321.92 679.50 L1336.01 679.50 L1350.09 679.50 L1364.18 679.50 L1378.27 679.50 L1392.36 679.50 L1406.44 679.50 L1420.53 679.50 L1434.62 679.50 L1448.71 679.50 L1462.80 679.50 L1476.88 679.50 L1490.97 679.50 L1505.06 679.50 L1519.15 679.50 L1533.23 679.50 L1547.32 679.50 L1561.41 679.50 L1575.50 679.50 L1589.59 679.50 L1603.67 679.50 L1617.76 679.50 L1631.85 679.50 L1645.94 679.50 L1660.02 679.50 L1674.11 679.50 L1688.20 679.50 L1702.29 679.50 L1716.38 679.50 L1730.46 679.50 L1744.55 679.50 L1758.64 679.50 L1772.73 679.50 L1786.81 679.50 L1800.90 679.50 L1814.99 679.50 L1814.99 680.00 L1302.90 680.00 Z" fill="#BA43A9" fill-opacity="0.1" stroke="none"/><path d="M1302.90 679.50 L1307.83 679.50 L1321.92 679.50 L1336.01 679.50 L1350.09 679.50 L1364.18 679.50 L1378.27 679.50 L1392.36 679.50 L1406.44 679.50 L1420.53 679.50 L1434.62 679.50 L1448.71 679.50 L1462.80 679.50 L1476.88 679.50 L1490.97 679.50 L1505.06 679.50 L1519.15 679.50 L1533.23 679.50 L1547.32 679.50 L1561.41 679.50 L1575.50 679.50 L1589.59 679.50 L1603.67 679.50 L1617.76 679.50 L1631.85 679.50 L1645.94 679.50 L1660.02 679.50 L1674.11 679.50 L1688.20 679.50 L1702.29 679.50 L1716.38 679.50 L1730.46 679.50 L1744.55 679.50 L1758.64 679.50 L1772.73 679.50 L1786.81 679.50 L1800.90 679.50 L1814.99 679.50" fill="none" stroke="#BA43A9" stroke-width="1.0" stroke-linejoin="round"/><path d="M1302.90 679.50 L1307.83 679.50 L1321.92 679.50 L1336.01 679.50 L1350.09 679.50 L1364.18 679.50 L1378.27 679.50 L1392.36 679.50 L1406.44 679.50 L1420.53 679.50 L1434.62 679.50 L1448.71 679.50 L1462.80 679.50 L1476.88 679.50 L1490.97 679.50 L1505.06 679.50 L1519.15 679.50 L1533.23 679.50 L1547.32 679.50 L1561.41 679.50 L1575.50 679.50 L1589.59 679.50 L1603.67 679.50 L1617.76 679.50 L1631.85 679.50 L1645.94 679.50 L1660.02 679.50 L1674.11 679.50 L1688.20 679.50 L1702.29 679.50 L1716.38 679.50 L1730.46 679.50 L1744.55 679.50 L1758.64 679.50 L1772.73 679.50 L1786.81 679.50 L1800.90 679.50 L1814.99 679.50 L1814.99 680.00 L1302.90 680.00 Z" fill="#705DA0" fill-opacity="0.1" stroke="none"/><path d="M1302.90 679.50 L1307.83 679.50 L1321.92 679.50 L1336.01 679.50 L1350.09 679.50 L1364.18 679.50 L1378.27 679.50 L1392.36 679.50 L1406.44 679.50 L1420.53 679.50 L1434.62 679.50 L1448.71 679.50 L1462.80 679.50 L1476.88 679.50 L1490.97 679.50 L1505.06 679.50 L1519.15 679.50 L1533.23 679.50 L1547.32 679.50 L1561.41 679.50 L1575.50 679.50 L1589.59 679.50 L1603.67 679.50 L1617.76 679.50 L1631.85 679.50 L1645.94 679.50 L1660.02 679.50 L1674.11 679.50 L1688.20 679.50 L1702.29 679.50 L1716.38 679.50 L1730.46 679.50 L1744.55 679.50 L1758.64 679.50 L1772.73 679.50 L1786.81 679.50 L1800.90 679.50 L1814.99 679.50" fill="none" stroke="#705DA0" stroke-width="1.0" stroke-linejoin="round"/><path d="M1302.90 679.50 L1307.83 679.50 L1321.92 679.50 L1336.01 679.50 L1350.09 679.50 L1364.18 679.50 L1378.27 679.50 L1392.36 679.50 L1406.44 679.50 L1420.53 679.50 L1434.62 679.50 L1448.71 679.50 L1462.80 679.50 L1476.88 679.50 L1490.97 679.50 L1505.06 679.50 L1519.15 679.50 L1533.23 679.50 L1547.32 679.50 L1561.41 679.50 L1575.50 679.50 L1589.59 679.50 L1603.67 679.50 L1617.76 679.50 L1631.85 679.50 L1645.94 679.50 L1660.02 679.50 L1674.11 679.50 L1688.20 679.50 L1702.29 679.50 L1716.38 679.50 L1730.46 679.50 L1744.55 679.50 L1758.64 679.50 L1772.73 679.50 L1786.81 679.50 L1800.90 679.50 L1814.99 679.50 L1814.99 680.00 L1302.90 680.00 Z" fill="#508642" fill-opacity="0.1" stroke="none"/><path d="M1302.90 679.50 L1307.83 679.50 L1321.92 679.50 L1336.01 679.50 L1350.09 679.50 L1364.18 679.50 L1378.27 679.50 L1392.36 679.50 L1406.44 679.50 L1420.53 679.50 L1434.62 679.50 L1448.71 679.50 L1462.80 679.50 L1476.88 679.50 L1490.97 679.50 L1505.06 679.50 L1519.15 679.50 L1533.23 679.50 L1547.32 679.50 L1561.41 679.50 L1575.50 679.50 L1589.59 679.50 L1603.67 679.50 L1617.76 679.50 L1631.85 679.50 L1645.94 679.50 L1660.02 679.50 L1674.11 679.50 L1688.20 679.50 L1702.29 679.50 L1716.38 679.50 L1730.46 679.50 L1744.55 679.50 L1758.64 679.50 L1772.73 679.50 L1786.81 679.50 L1800.90 679.50 L1814.99 679.50" fill="none" stroke="#508642" stroke-width="1.0" stroke-linejoin="round"/><path d="M1302.90 679.50 L1307.83 679.50 L1321.92 679.50 L1336.01 679.50 L1350.09 679.50 L1364.18 679.50 L1378.27 679.50 L1392.36 679.50 L1406.44 679.50 L1420.53 679.50 L1434.62 679.50 L1448.71 679.50 L1462.80 679.50 L1476.88 679.50 L1490.97 679.50 L1505.06 679.50 L1519.15 679.50 L1533.23 679.50 L1547.32 679.50 L1561.41 679.50 L1575.50 679.50 L1589.59 679.50 L1603.67 679.50 L1617.76 679.50 L1631.85 679.50 L1645.94 679.50 L1660.02 679.50 L1674.11 679.50 L1688.20 679.50 L1702.29 679.50 L1716.38 679.50 L1730.46 679.50 L1744.55 679.50 L1758.64 679.50 L1772.73 679.50 L1786.81 679.50 L1800.90 679.50 L1814.99 679.50 L1814.99 680.00 L1302.90 680.00 Z" fill="#CCA300" fill-opacity="0.1" stroke="none"/><path d="M1302.90 679.50 L1307.83 679.50 L1321.92 679.50 L1336.01 679.50 L1350.09 679.50 L1364.18 679.50 L1378.27 679.50 L1392.36 679.50 L1406.44 679.50 L1420.53 679.50 L1434.62 679.50 L1448.71 679.50 L1462.80 679.50 L1476.88 679.50 L1490.97 679.50 L1505.06 679.50 L1519.15 679.50 L1533.23 679.50 L1547.32 679.50 L1561.41 679.50 L1575.50 679.50 L1589.59 679.50 L1603.67 679.50 L1617.76 679.50 L1631.85 679.50 L1645.94 679.50 L1660.02 679.50 L1674.11 679.50 L1688.20 679.50 L1702.29 679.50 L1716.38 679.50 L1730.46 679.50 L1744.55 679.50 L1758.64 679.50 L1772.73 679.50 L1786.81 679.50 L1800.90 679.50 L1814.99 679.50" fill="none" stroke="#CCA300" stroke-width="1.0" stroke-linejoin="round"/><path d="M1302.90 679.50 L1307.83 679.50 L1321.92 679.50 L1336.01 679.50 L1350.09 679.50 L1364.18 679.50 L1378.27 679.50 L1392.36 679.50 L1406.44 679.50 L1420.53 679.50 L1434.62 679.50 L1448.71 679.50 L1462.80 679.50 L1476.88 679.50 L1490.97 679.50 L1505.06 679.50 L1519.15 679.50 L1533.23 679.50 L1547.32 679.50 L1561.41 679.50 L1575.50 679.50 L1589.59 679.50 L1603.67 679.50 L1617.76 679.50 L1631.85 679.50 L1645.94 679.50 L1660.02 679.50 L1674.11 679.50 L1688.20 679.50 L1702.29 679.50 L1716.38 679.50 L1730.46 679.50 L1744.55 679.50 L1758.64 679.50 L1772.73 679.50 L1786.81 679.50 L1800.90 679.50 L1814.99 679.50 L1814.99 680.00 L1302.90 680.00 Z" fill="#447EBC" fill-opacity="0.1" stroke="none"/><path d="M1302.90 679.50 L1307.83 679.50 L1321.92 679.50 L1336.01 679.50 L1350.09 679.50 L1364.18 679.50 L1378.27 679.50 L1392.36 679.50 L1406.44 679.50 L1420.53 679.50 L1434.62 679.50 L1448.71 679.50 L1462.80 679.50 L1476.88 679.50 L1490.97 679.50 L1505.06 679.50 L1519.15 679.50 L1533.23 679.50 L1547.32 679.50 L1561.41 679.50 L1575.50 679.50 L1589.59 679.50 L1603.67 679.50 L1617.76 679.50 L1631.85 679.50 L1645.94 679.50 L1660.02 679.50 L1674.11 679.50 L1688.20 679.50 L1702.29 679.50 L1716.38 679.50 L1730.46 679.50 L1744.55 679.50 L1758.64 679.50 L1772.73 679.50 L1786.81 679.50 L1800.90 679.50 L1814.99 679.50" fill="none" stroke="#447EBC" stroke-width="1.0" stroke-linejoin="round"/><path d="M1302.90 612.50 L1307.83 605.40 L1321.92 582.00 L1336.01 583.60 L1350.09 576.50 L1364.18 594.30 L1378.27 581.10 L1392.36 585.60 L1406.44 591.70 L1420.53 588.10 L1434.62 584.40 L1448.71 596.00 L1462.80 592.20 L1476.88 588.40 L1490.97 601.00 L1505.06 599.60 L1519.15 597.60 L1533.23 598.00 L1547.32 603.80 L1561.41 599.60 L1575.50 595.50 L1589.59 599.30 L1603.67 592.70 L1617.76 595.50 L1631.85 601.30 L1645.94 587.20 L1660.02 589.40 L1674.11 599.30 L1688.20 588.40 L1702.29 598.30 L1716.38 603.30 L1730.46 582.30 L1744.55 601.30 L1758.64 591.70 L1772.73 587.70 L1786.81 615.30 L1800.90 588.90 L1814.99 583.90 L1814.99 680.00 L1302.90 680.00 Z" fill="#cc6a22" fill-opacity="0.1" stroke="none"/><path d="M1302.90 612.50 L1307.83 605.40 L1321.92 582.00 L1336.01 583.60 L1350.09 576.50 L1364.18 594.30 L1378.27 581.10 L1392.36 585.60 L1406.44 591.70 L1420.53 588.10 L1434.62 584.40 L1448.71 596.00 L1462.80 592.20 L1476.88 588.40 L1490.97 601.00 L1505.06 599.60 L1519.15 597.60 L1533.23 598.00 L1547.32 603.80 L1561.41 599.60 L1575.50 595.50 L1589.59 599.30 L1603.67 592.70 L1617.76 595.50 L1631.85 601.30 L1645.94 587.20 L1660.02 589.40 L1674.11 599.30 L1688.20 588.40 L1702.29 598.30 L1716.38 603.30 L1730.46 582.30 L1744.55 601.30 L1758.64 591.70 L1772.73 587.70 L1786.81 615.30 L1800.90 588.90 L1814.99 583.90" fill="none" stroke="#cc6a22" stroke-width="1.0" stroke-linejoin="round"/></g><text x="1298.50" y="568.60" font-size="11" text-anchor="end" textLength="44.8" lengthAdjust="spacingAndGlyphs" fill="#ccccdc">800 kB/s</text><text x="1298.50" y="597.10" font-size="11" text-anchor="end" textLength="44.8" lengthAdjust="spacingAndGlyphs" fill="#ccccdc">600 kB/s</text><text x="1298.50" y="625.60" font-size="11" text-anchor="end" textLength="44.8" lengthAdjust="spacingAndGlyphs" fill="#ccccdc">400 kB/s</text><text x="1298.50" y="654.10" font-size="11" text-anchor="end" textLength="44.8" lengthAdjust="spacingAndGlyphs" fill="#ccccdc">200 kB/s</text><text x="1298.50" y="682.60" font-size="11" text-anchor="end" textLength="31.7" lengthAdjust="spacingAndGlyphs" fill="#ccccdc">0 kB/s</text><text x="1336.01" y="696.20" font-size="11" text-anchor="middle" textLength="26" lengthAdjust="spacingAndGlyphs" fill="#ccccdc">15:15</text><text x="1420.53" y="696.20" font-size="11" text-anchor="middle" textLength="26" lengthAdjust="spacingAndGlyphs" fill="#ccccdc">15:16</text><text x="1505.06" y="696.20" font-size="11" text-anchor="middle" textLength="26" lengthAdjust="spacingAndGlyphs" fill="#ccccdc">15:17</text><text x="1589.59" y="696.20" font-size="11" text-anchor="middle" textLength="26" lengthAdjust="spacingAndGlyphs" fill="#ccccdc">15:18</text><text x="1674.11" y="696.20" font-size="11" text-anchor="middle" textLength="26" lengthAdjust="spacingAndGlyphs" fill="#ccccdc">15:19</text><text x="1758.64" y="696.20" font-size="11" text-anchor="middle" textLength="26" lengthAdjust="spacingAndGlyphs" fill="#ccccdc">15:20</text><rect x="1261" y="715" width="13" height="4" rx="1.2" fill="#7EB26D"/><text x="1286.30" y="719.00" font-size="11" textLength="20" lengthAdjust="spacingAndGlyphs" fill="#ccccdc">sdb</text><rect x="1320.1" y="715" width="13" height="4" rx="1.2" fill="#EAB839"/><text x="1345.80" y="719.00" font-size="11" textLength="19" lengthAdjust="spacingAndGlyphs" fill="#ccccdc">sdc</text><rect x="1378" y="715" width="13" height="4" rx="1.2" fill="#6ED0E0"/><text x="1403.70" y="719.00" font-size="11" textLength="20" lengthAdjust="spacingAndGlyphs" fill="#ccccdc">sdd</text><rect x="1437.2" y="715" width="13" height="4" rx="1.2" fill="#EF843C"/><text x="1462.60" y="719.00" font-size="11" textLength="19.5" lengthAdjust="spacingAndGlyphs" fill="#ccccdc">sde</text><rect x="1496.1" y="715" width="13" height="4" rx="1.2" fill="#E24D42"/><text x="1521.20" y="719.00" font-size="11" textLength="17" lengthAdjust="spacingAndGlyphs" fill="#ccccdc">sdf</text><rect x="1551.9" y="715" width="13" height="4" rx="1.2" fill="#1F78C1"/><text x="1577.20" y="719.00" font-size="11" textLength="19.8" lengthAdjust="spacingAndGlyphs" fill="#ccccdc">sdg</text><rect x="1610.7" y="715" width="13" height="4" rx="1.2" fill="#BA43A9"/><text x="1636.40" y="719.00" font-size="11" textLength="19.5" lengthAdjust="spacingAndGlyphs" fill="#ccccdc">sdh</text><rect x="1669.3" y="715" width="13" height="4" rx="1.2" fill="#705DA0"/><text x="1694.60" y="719.00" font-size="11" textLength="15.5" lengthAdjust="spacingAndGlyphs" fill="#ccccdc">sdi</text><rect x="1724" y="715" width="13" height="4" rx="1.2" fill="#508642"/><text x="1749.40" y="719.00" font-size="11" textLength="15.2" lengthAdjust="spacingAndGlyphs" fill="#ccccdc">sdj</text><rect x="1779.1" y="715" width="13" height="4" rx="1.2" fill="#CCA300"/><text x="1804.80" y="719.00" font-size="11" textLength="19.5" lengthAdjust="spacingAndGlyphs" fill="#ccccdc">sdk</text><rect x="1261" y="734" width="13" height="4" rx="1.2" fill="#447EBC"/><text x="1286.30" y="738.00" font-size="11" textLength="15.5" lengthAdjust="spacingAndGlyphs" fill="#ccccdc">sdl</text><rect x="1316" y="734" width="13" height="4" rx="1.2" fill="#C15C17"/><text x="1341.40" y="738.00" font-size="11" textLength="19.5" lengthAdjust="spacingAndGlyphs" fill="#ccccdc">sda</text></svg></body></html>
